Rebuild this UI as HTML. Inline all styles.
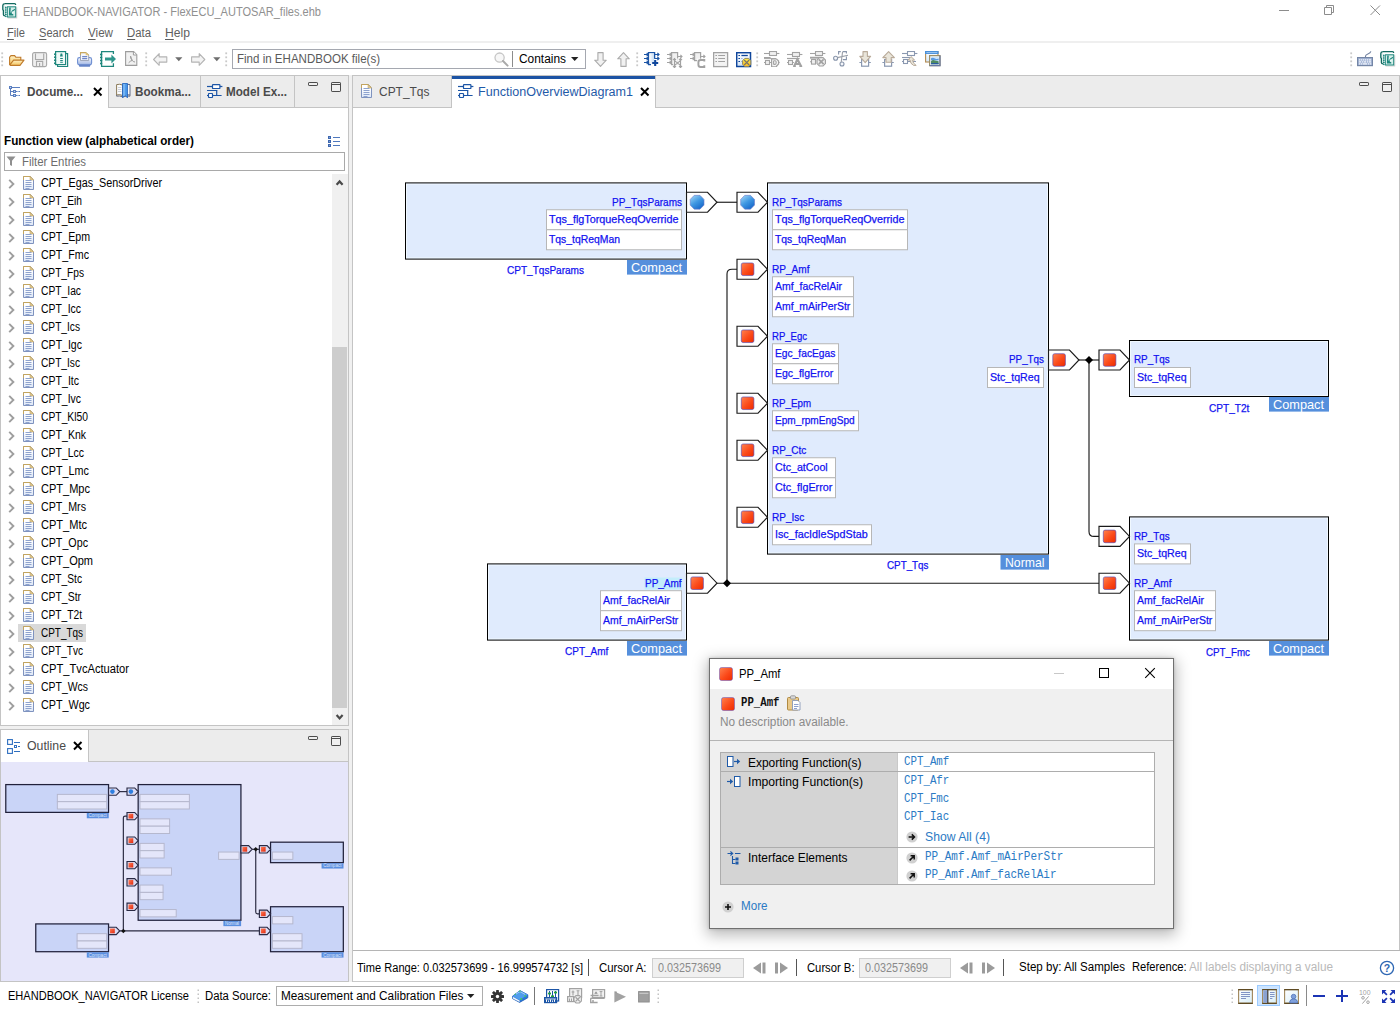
<!DOCTYPE html>
<html><head><meta charset="utf-8"><title>EHANDBOOK-NAVIGATOR</title>
<style>
html,body{margin:0;padding:0;background:#fff;}
body{width:1400px;height:1010px;position:relative;overflow:hidden;font-family:"Liberation Sans",sans-serif;}
.t{position:absolute;white-space:nowrap;line-height:1;transform-origin:0 0;}
.r{position:absolute;display:block;}
u{text-decoration:underline;text-underline-offset:1.5px;}
</style></head><body>
<span class="t" style="left:23.00px;top:6.04px;font-size:12px;color:#909090;transform:scaleX(0.9201);">EHANDBOOK-NAVIGATOR - FlexECU_AUTOSAR_files.ehb</span>
<svg class="r" style="left:1270px;top:0px;" width="130" height="22"><path d="M9 10.5H19" stroke="#8c8c8c" stroke-width="1" fill="none"/><path d="M54.5 7.5h7v7h-7zM56.5 7.5v-2h7v7h-2" stroke="#8c8c8c" stroke-width="1" fill="none"/><path d="M100.5 5.500l9.500 9.500M110 5.500l-9.500 9.500" stroke="#8c8c8c" stroke-width="1" fill="none"/></svg>
<span class="t" style="left:7.00px;top:27.04px;font-size:12px;color:#5f5f5f;transform:scaleX(0.9309);"><u>F</u>ile</span>
<span class="t" style="left:39.00px;top:27.04px;font-size:12px;color:#5f5f5f;transform:scaleX(0.9205);"><u>S</u>earch</span>
<span class="t" style="left:88.00px;top:27.04px;font-size:12px;color:#5f5f5f;transform:scaleX(0.9692);"><u>V</u>iew</span>
<span class="t" style="left:127.00px;top:27.04px;font-size:12px;color:#5f5f5f;transform:scaleX(0.9468);"><u>D</u>ata</span>
<span class="t" style="left:165.00px;top:27.04px;font-size:12px;color:#5f5f5f;transform:scaleX(1.0130);"><u>H</u>elp</span>
<div class="r" style="left:0px;top:41px;width:1400px;height:2px;background:#efefef;"></div>
<div class="r" style="left:232px;top:49px;width:354px;height:20px;background:#fff;border:1px solid #a5a8b0;box-sizing:border-box;"></div>
<span class="t" style="left:237.00px;top:52.64px;font-size:12px;color:#5a5a5a;transform:scaleX(0.9617);">Find in EHANDBOOK file(s)</span>
<div class="r" style="left:512px;top:51px;width:1px;height:16px;background:#8c8c8c;"></div>
<span class="t" style="left:519.00px;top:52.64px;font-size:12px;color:#000;transform:scaleX(0.9924);">Contains</span>
<svg class="r" style="left:570px;top:56px;" width="10" height="6"><path d="M1 1h7.4l-3.7 4z" fill="#222"/></svg>
<div class="r" style="left:0px;top:75px;width:349px;height:651px;background:#fff;border:1px solid #c4c4c4;box-sizing:border-box;"></div>
<div class="r" style="left:1px;top:76px;width:347px;height:31px;background:#ececec;"></div>
<div class="r" style="left:1px;top:107px;width:347px;height:1px;background:#c4c4c4;"></div>
<div class="r" style="left:1px;top:76px;width:107px;height:32px;background:#fff;"></div>
<div class="r" style="left:108px;top:76px;width:1px;height:31px;background:#c4c4c4;"></div>
<div class="r" style="left:200px;top:76px;width:1px;height:31px;background:#c4c4c4;"></div>
<div class="r" style="left:294px;top:76px;width:1px;height:31px;background:#c4c4c4;"></div>
<span class="t" style="left:27.00px;top:85.84px;font-size:12px;color:#4a4a4a;transform:scaleX(0.9765);font-weight:700;">Docume...</span>
<span class="t" style="left:134.50px;top:85.84px;font-size:12px;color:#4a4a4a;transform:scaleX(0.9765);font-weight:700;">Bookma...</span>
<span class="t" style="left:226.00px;top:85.84px;font-size:12px;color:#4a4a4a;transform:scaleX(0.9732);font-weight:700;">Model Ex...</span>
<svg class="r" style="left:92.7px;top:86.7px;" width="10" height="10"><path d="M1 1l7.5 7.5M8.5 1l-7.5 7.5" stroke="#000" stroke-width="2" fill="none"/></svg>
<svg class="r" style="left:308px;top:82px;" width="11" height="6"><rect x="0.5" y="0.5" width="9" height="3" rx="0.6" fill="#f0f0f0" stroke="#4c4c4c" stroke-width="1"/></svg><svg class="r" style="left:331px;top:82px;" width="11" height="11"><rect x="0.5" y="0.5" width="9" height="9" rx="0.6" fill="#f0f0f0" stroke="#4c4c4c" stroke-width="1"/><path d="M0.5 2.5h9" stroke="#4c4c4c" stroke-width="1"/></svg>
<div class="r" style="left:352px;top:75px;width:1048px;height:876px;background:#fff;border:1px solid #c4c4c4;box-sizing:border-box;"></div>
<div class="r" style="left:353px;top:76px;width:1046px;height:31px;background:#ececec;"></div>
<div class="r" style="left:353px;top:107px;width:1046px;height:1px;background:#c4c4c4;"></div>
<div class="r" style="left:452px;top:76px;width:203px;height:32px;background:#fff;"></div>
<div class="r" style="left:452px;top:76px;width:203px;height:3px;background:#1c53a4;"></div>
<div class="r" style="left:451px;top:76px;width:1px;height:31px;background:#c4c4c4;"></div>
<div class="r" style="left:655px;top:76px;width:1px;height:31px;background:#c4c4c4;"></div>
<span class="t" style="left:378.50px;top:86.24px;font-size:12px;color:#4a4a4a;transform:scaleX(0.9965);">CPT_Tqs</span>
<span class="t" style="left:478.00px;top:86.24px;font-size:12px;color:#1f5aa8;transform:scaleX(1.0469);">FunctionOverviewDiagram1</span>
<svg class="r" style="left:639.7px;top:86.7px;" width="10" height="10"><path d="M1 1l7.5 7.5M8.5 1l-7.5 7.5" stroke="#000" stroke-width="2" fill="none"/></svg>
<svg class="r" style="left:1359px;top:82px;" width="11" height="6"><rect x="0.5" y="0.5" width="9" height="3" rx="0.6" fill="#f0f0f0" stroke="#4c4c4c" stroke-width="1"/></svg><svg class="r" style="left:1382px;top:82px;" width="11" height="11"><rect x="0.5" y="0.5" width="9" height="9" rx="0.6" fill="#f0f0f0" stroke="#4c4c4c" stroke-width="1"/><path d="M0.5 2.5h9" stroke="#4c4c4c" stroke-width="1"/></svg>
<div class="r" style="left:349px;top:75px;width:3px;height:907px;background:#f0f0f0;"></div>
<div class="r" style="left:0px;top:726px;width:349px;height:3px;background:#f0f0f0;"></div>
<span class="t" style="left:4.00px;top:135.04px;font-size:12px;color:#000;transform:scaleX(0.9759);font-weight:700;">Function view (alphabetical order)</span>
<div class="r" style="left:4px;top:152px;width:341px;height:19px;background:#fff;border:1px solid #a9a9a9;box-sizing:border-box;"></div>
<span class="t" style="left:22.00px;top:156.04px;font-size:12px;color:#6d6d6d;transform:scaleX(0.9503);">Filter Entries</span>
<svg class="r" style="left:6.3px;top:156px;" width="10" height="11"><path d="M0.500 0.500h9l-3.500 4.200v5.300l-2-1v-4.300z" fill="#8f8f8f"/></svg>
<svg class="r" style="left:327px;top:135px;" width="14" height="13"><rect x="1.5" y="1.5" width="2" height="2" fill="#7f9fd4" stroke="#3d67b0" stroke-width="1"/><path d="M6 2.5h7" stroke="#4f78bd" stroke-width="1"/><rect x="1.5" y="5.5" width="2" height="2" fill="#7f9fd4" stroke="#3d67b0" stroke-width="1"/><path d="M6 6.5h7" stroke="#4f78bd" stroke-width="1"/><rect x="1.5" y="9.5" width="2" height="2" fill="#7f9fd4" stroke="#3d67b0" stroke-width="1"/><path d="M6 10.5h7" stroke="#4f78bd" stroke-width="1"/></svg>
<svg class="r" style="left:8px;top:179px;" width="8" height="10"><path d="M1.200 0.800l4.200 4.200-4.200 4.200" stroke="#9e9e9e" stroke-width="1.900" fill="none"/></svg>
<svg class="r" style="left:23px;top:176px;" width="12" height="15"><defs><linearGradient id="dg" x1="0" y1="0" x2="0" y2="1"><stop offset="0.35" stop-color="#fff"/><stop offset="1" stop-color="#dce6f6"/></linearGradient></defs><path d="M0.5 0.5h6.600l3.400 3.400v9.600h-10z" fill="url(#dg)" stroke="#7f93bf" stroke-width="1"/><path d="M0.500 4V0.500h6.600l3.400 3.400" fill="none" stroke="#c4a55e" stroke-width="1"/><path d="M7.100 0.700v3.200h3.200z" fill="#e8d5a0" stroke="#c4a55e" stroke-width="0.700"/><path d="M2.500 4.5h6" stroke="#8ea3cf" stroke-width="1"/><path d="M2.500 6.5h6" stroke="#8ea3cf" stroke-width="1"/><path d="M2.500 8.5h6" stroke="#8ea3cf" stroke-width="1"/><path d="M2.500 10.5h6" stroke="#8ea3cf" stroke-width="1"/><path d="M2.500 12.5h4" stroke="#8ea3cf" stroke-width="1"/></svg>
<span class="t" style="left:41.20px;top:177.04px;font-size:12px;color:#000;transform:scaleX(0.8982);">CPT_Egas_SensorDriver</span>
<svg class="r" style="left:8px;top:197px;" width="8" height="10"><path d="M1.200 0.800l4.200 4.200-4.200 4.200" stroke="#9e9e9e" stroke-width="1.900" fill="none"/></svg>
<svg class="r" style="left:23px;top:194px;" width="12" height="15"><defs><linearGradient id="dg" x1="0" y1="0" x2="0" y2="1"><stop offset="0.35" stop-color="#fff"/><stop offset="1" stop-color="#dce6f6"/></linearGradient></defs><path d="M0.5 0.5h6.600l3.400 3.400v9.600h-10z" fill="url(#dg)" stroke="#7f93bf" stroke-width="1"/><path d="M0.500 4V0.500h6.600l3.400 3.400" fill="none" stroke="#c4a55e" stroke-width="1"/><path d="M7.100 0.700v3.200h3.200z" fill="#e8d5a0" stroke="#c4a55e" stroke-width="0.700"/><path d="M2.500 4.5h6" stroke="#8ea3cf" stroke-width="1"/><path d="M2.500 6.5h6" stroke="#8ea3cf" stroke-width="1"/><path d="M2.500 8.5h6" stroke="#8ea3cf" stroke-width="1"/><path d="M2.500 10.5h6" stroke="#8ea3cf" stroke-width="1"/><path d="M2.500 12.5h4" stroke="#8ea3cf" stroke-width="1"/></svg>
<span class="t" style="left:41.20px;top:195.04px;font-size:12px;color:#000;transform:scaleX(0.8538);">CPT_Eih</span>
<svg class="r" style="left:8px;top:215px;" width="8" height="10"><path d="M1.200 0.800l4.200 4.200-4.200 4.200" stroke="#9e9e9e" stroke-width="1.900" fill="none"/></svg>
<svg class="r" style="left:23px;top:212px;" width="12" height="15"><defs><linearGradient id="dg" x1="0" y1="0" x2="0" y2="1"><stop offset="0.35" stop-color="#fff"/><stop offset="1" stop-color="#dce6f6"/></linearGradient></defs><path d="M0.5 0.5h6.600l3.400 3.400v9.600h-10z" fill="url(#dg)" stroke="#7f93bf" stroke-width="1"/><path d="M0.500 4V0.500h6.600l3.400 3.400" fill="none" stroke="#c4a55e" stroke-width="1"/><path d="M7.100 0.700v3.200h3.200z" fill="#e8d5a0" stroke="#c4a55e" stroke-width="0.700"/><path d="M2.500 4.5h6" stroke="#8ea3cf" stroke-width="1"/><path d="M2.500 6.5h6" stroke="#8ea3cf" stroke-width="1"/><path d="M2.500 8.5h6" stroke="#8ea3cf" stroke-width="1"/><path d="M2.500 10.5h6" stroke="#8ea3cf" stroke-width="1"/><path d="M2.500 12.5h4" stroke="#8ea3cf" stroke-width="1"/></svg>
<span class="t" style="left:41.20px;top:213.04px;font-size:12px;color:#000;transform:scaleX(0.8650);">CPT_Eoh</span>
<svg class="r" style="left:8px;top:233px;" width="8" height="10"><path d="M1.200 0.800l4.200 4.200-4.200 4.200" stroke="#9e9e9e" stroke-width="1.900" fill="none"/></svg>
<svg class="r" style="left:23px;top:230px;" width="12" height="15"><defs><linearGradient id="dg" x1="0" y1="0" x2="0" y2="1"><stop offset="0.35" stop-color="#fff"/><stop offset="1" stop-color="#dce6f6"/></linearGradient></defs><path d="M0.5 0.5h6.600l3.400 3.400v9.600h-10z" fill="url(#dg)" stroke="#7f93bf" stroke-width="1"/><path d="M0.500 4V0.500h6.600l3.400 3.400" fill="none" stroke="#c4a55e" stroke-width="1"/><path d="M7.100 0.700v3.200h3.200z" fill="#e8d5a0" stroke="#c4a55e" stroke-width="0.700"/><path d="M2.500 4.5h6" stroke="#8ea3cf" stroke-width="1"/><path d="M2.500 6.5h6" stroke="#8ea3cf" stroke-width="1"/><path d="M2.500 8.5h6" stroke="#8ea3cf" stroke-width="1"/><path d="M2.500 10.5h6" stroke="#8ea3cf" stroke-width="1"/><path d="M2.500 12.5h4" stroke="#8ea3cf" stroke-width="1"/></svg>
<span class="t" style="left:41.20px;top:231.04px;font-size:12px;color:#000;transform:scaleX(0.8853);">CPT_Epm</span>
<svg class="r" style="left:8px;top:251px;" width="8" height="10"><path d="M1.200 0.800l4.200 4.200-4.200 4.200" stroke="#9e9e9e" stroke-width="1.900" fill="none"/></svg>
<svg class="r" style="left:23px;top:248px;" width="12" height="15"><defs><linearGradient id="dg" x1="0" y1="0" x2="0" y2="1"><stop offset="0.35" stop-color="#fff"/><stop offset="1" stop-color="#dce6f6"/></linearGradient></defs><path d="M0.5 0.5h6.600l3.400 3.400v9.600h-10z" fill="url(#dg)" stroke="#7f93bf" stroke-width="1"/><path d="M0.500 4V0.500h6.600l3.400 3.400" fill="none" stroke="#c4a55e" stroke-width="1"/><path d="M7.100 0.700v3.200h3.200z" fill="#e8d5a0" stroke="#c4a55e" stroke-width="0.700"/><path d="M2.500 4.5h6" stroke="#8ea3cf" stroke-width="1"/><path d="M2.500 6.5h6" stroke="#8ea3cf" stroke-width="1"/><path d="M2.500 8.5h6" stroke="#8ea3cf" stroke-width="1"/><path d="M2.500 10.5h6" stroke="#8ea3cf" stroke-width="1"/><path d="M2.500 12.5h4" stroke="#8ea3cf" stroke-width="1"/></svg>
<span class="t" style="left:41.20px;top:249.04px;font-size:12px;color:#000;transform:scaleX(0.8889);">CPT_Fmc</span>
<svg class="r" style="left:8px;top:269px;" width="8" height="10"><path d="M1.200 0.800l4.200 4.200-4.200 4.200" stroke="#9e9e9e" stroke-width="1.900" fill="none"/></svg>
<svg class="r" style="left:23px;top:266px;" width="12" height="15"><defs><linearGradient id="dg" x1="0" y1="0" x2="0" y2="1"><stop offset="0.35" stop-color="#fff"/><stop offset="1" stop-color="#dce6f6"/></linearGradient></defs><path d="M0.5 0.5h6.600l3.400 3.400v9.600h-10z" fill="url(#dg)" stroke="#7f93bf" stroke-width="1"/><path d="M0.500 4V0.500h6.600l3.400 3.400" fill="none" stroke="#c4a55e" stroke-width="1"/><path d="M7.100 0.700v3.200h3.200z" fill="#e8d5a0" stroke="#c4a55e" stroke-width="0.700"/><path d="M2.500 4.5h6" stroke="#8ea3cf" stroke-width="1"/><path d="M2.500 6.5h6" stroke="#8ea3cf" stroke-width="1"/><path d="M2.500 8.5h6" stroke="#8ea3cf" stroke-width="1"/><path d="M2.500 10.5h6" stroke="#8ea3cf" stroke-width="1"/><path d="M2.500 12.5h4" stroke="#8ea3cf" stroke-width="1"/></svg>
<span class="t" style="left:41.20px;top:267.04px;font-size:12px;color:#000;transform:scaleX(0.8485);">CPT_Fps</span>
<svg class="r" style="left:8px;top:287px;" width="8" height="10"><path d="M1.200 0.800l4.200 4.200-4.200 4.200" stroke="#9e9e9e" stroke-width="1.900" fill="none"/></svg>
<svg class="r" style="left:23px;top:284px;" width="12" height="15"><defs><linearGradient id="dg" x1="0" y1="0" x2="0" y2="1"><stop offset="0.35" stop-color="#fff"/><stop offset="1" stop-color="#dce6f6"/></linearGradient></defs><path d="M0.5 0.5h6.600l3.400 3.400v9.600h-10z" fill="url(#dg)" stroke="#7f93bf" stroke-width="1"/><path d="M0.500 4V0.500h6.600l3.400 3.400" fill="none" stroke="#c4a55e" stroke-width="1"/><path d="M7.100 0.700v3.200h3.200z" fill="#e8d5a0" stroke="#c4a55e" stroke-width="0.700"/><path d="M2.500 4.5h6" stroke="#8ea3cf" stroke-width="1"/><path d="M2.500 6.5h6" stroke="#8ea3cf" stroke-width="1"/><path d="M2.500 8.5h6" stroke="#8ea3cf" stroke-width="1"/><path d="M2.500 10.5h6" stroke="#8ea3cf" stroke-width="1"/><path d="M2.500 12.5h4" stroke="#8ea3cf" stroke-width="1"/></svg>
<span class="t" style="left:41.20px;top:285.04px;font-size:12px;color:#000;transform:scaleX(0.8569);">CPT_Iac</span>
<svg class="r" style="left:8px;top:305px;" width="8" height="10"><path d="M1.200 0.800l4.200 4.200-4.200 4.200" stroke="#9e9e9e" stroke-width="1.900" fill="none"/></svg>
<svg class="r" style="left:23px;top:302px;" width="12" height="15"><defs><linearGradient id="dg" x1="0" y1="0" x2="0" y2="1"><stop offset="0.35" stop-color="#fff"/><stop offset="1" stop-color="#dce6f6"/></linearGradient></defs><path d="M0.5 0.5h6.600l3.400 3.400v9.600h-10z" fill="url(#dg)" stroke="#7f93bf" stroke-width="1"/><path d="M0.500 4V0.500h6.600l3.400 3.400" fill="none" stroke="#c4a55e" stroke-width="1"/><path d="M7.100 0.700v3.200h3.200z" fill="#e8d5a0" stroke="#c4a55e" stroke-width="0.700"/><path d="M2.500 4.5h6" stroke="#8ea3cf" stroke-width="1"/><path d="M2.500 6.5h6" stroke="#8ea3cf" stroke-width="1"/><path d="M2.500 8.5h6" stroke="#8ea3cf" stroke-width="1"/><path d="M2.500 10.5h6" stroke="#8ea3cf" stroke-width="1"/><path d="M2.500 12.5h4" stroke="#8ea3cf" stroke-width="1"/></svg>
<span class="t" style="left:41.20px;top:303.04px;font-size:12px;color:#000;transform:scaleX(0.8694);">CPT_Icc</span>
<svg class="r" style="left:8px;top:323px;" width="8" height="10"><path d="M1.200 0.800l4.200 4.200-4.200 4.200" stroke="#9e9e9e" stroke-width="1.900" fill="none"/></svg>
<svg class="r" style="left:23px;top:320px;" width="12" height="15"><defs><linearGradient id="dg" x1="0" y1="0" x2="0" y2="1"><stop offset="0.35" stop-color="#fff"/><stop offset="1" stop-color="#dce6f6"/></linearGradient></defs><path d="M0.5 0.5h6.600l3.400 3.400v9.600h-10z" fill="url(#dg)" stroke="#7f93bf" stroke-width="1"/><path d="M0.500 4V0.500h6.600l3.400 3.400" fill="none" stroke="#c4a55e" stroke-width="1"/><path d="M7.100 0.700v3.200h3.200z" fill="#e8d5a0" stroke="#c4a55e" stroke-width="0.700"/><path d="M2.500 4.5h6" stroke="#8ea3cf" stroke-width="1"/><path d="M2.500 6.5h6" stroke="#8ea3cf" stroke-width="1"/><path d="M2.500 8.5h6" stroke="#8ea3cf" stroke-width="1"/><path d="M2.500 10.5h6" stroke="#8ea3cf" stroke-width="1"/><path d="M2.500 12.5h4" stroke="#8ea3cf" stroke-width="1"/></svg>
<span class="t" style="left:41.20px;top:321.04px;font-size:12px;color:#000;transform:scaleX(0.8477);">CPT_Ics</span>
<svg class="r" style="left:8px;top:341px;" width="8" height="10"><path d="M1.200 0.800l4.200 4.200-4.200 4.200" stroke="#9e9e9e" stroke-width="1.900" fill="none"/></svg>
<svg class="r" style="left:23px;top:338px;" width="12" height="15"><defs><linearGradient id="dg" x1="0" y1="0" x2="0" y2="1"><stop offset="0.35" stop-color="#fff"/><stop offset="1" stop-color="#dce6f6"/></linearGradient></defs><path d="M0.5 0.5h6.600l3.400 3.400v9.600h-10z" fill="url(#dg)" stroke="#7f93bf" stroke-width="1"/><path d="M0.500 4V0.500h6.600l3.400 3.400" fill="none" stroke="#c4a55e" stroke-width="1"/><path d="M7.100 0.700v3.200h3.200z" fill="#e8d5a0" stroke="#c4a55e" stroke-width="0.700"/><path d="M2.500 4.5h6" stroke="#8ea3cf" stroke-width="1"/><path d="M2.500 6.5h6" stroke="#8ea3cf" stroke-width="1"/><path d="M2.500 8.5h6" stroke="#8ea3cf" stroke-width="1"/><path d="M2.500 10.5h6" stroke="#8ea3cf" stroke-width="1"/><path d="M2.500 12.5h4" stroke="#8ea3cf" stroke-width="1"/></svg>
<span class="t" style="left:41.20px;top:339.04px;font-size:12px;color:#000;transform:scaleX(0.8783);">CPT_Igc</span>
<svg class="r" style="left:8px;top:359px;" width="8" height="10"><path d="M1.200 0.800l4.200 4.200-4.200 4.200" stroke="#9e9e9e" stroke-width="1.900" fill="none"/></svg>
<svg class="r" style="left:23px;top:356px;" width="12" height="15"><defs><linearGradient id="dg" x1="0" y1="0" x2="0" y2="1"><stop offset="0.35" stop-color="#fff"/><stop offset="1" stop-color="#dce6f6"/></linearGradient></defs><path d="M0.5 0.5h6.600l3.400 3.400v9.600h-10z" fill="url(#dg)" stroke="#7f93bf" stroke-width="1"/><path d="M0.500 4V0.500h6.600l3.400 3.400" fill="none" stroke="#c4a55e" stroke-width="1"/><path d="M7.100 0.700v3.200h3.200z" fill="#e8d5a0" stroke="#c4a55e" stroke-width="0.700"/><path d="M2.500 4.5h6" stroke="#8ea3cf" stroke-width="1"/><path d="M2.500 6.5h6" stroke="#8ea3cf" stroke-width="1"/><path d="M2.500 8.5h6" stroke="#8ea3cf" stroke-width="1"/><path d="M2.500 10.5h6" stroke="#8ea3cf" stroke-width="1"/><path d="M2.500 12.5h4" stroke="#8ea3cf" stroke-width="1"/></svg>
<span class="t" style="left:41.20px;top:357.04px;font-size:12px;color:#000;transform:scaleX(0.8477);">CPT_Isc</span>
<svg class="r" style="left:8px;top:377px;" width="8" height="10"><path d="M1.200 0.800l4.200 4.200-4.200 4.200" stroke="#9e9e9e" stroke-width="1.900" fill="none"/></svg>
<svg class="r" style="left:23px;top:374px;" width="12" height="15"><defs><linearGradient id="dg" x1="0" y1="0" x2="0" y2="1"><stop offset="0.35" stop-color="#fff"/><stop offset="1" stop-color="#dce6f6"/></linearGradient></defs><path d="M0.5 0.5h6.600l3.400 3.400v9.600h-10z" fill="url(#dg)" stroke="#7f93bf" stroke-width="1"/><path d="M0.500 4V0.500h6.600l3.400 3.400" fill="none" stroke="#c4a55e" stroke-width="1"/><path d="M7.100 0.700v3.200h3.200z" fill="#e8d5a0" stroke="#c4a55e" stroke-width="0.700"/><path d="M2.500 4.5h6" stroke="#8ea3cf" stroke-width="1"/><path d="M2.500 6.5h6" stroke="#8ea3cf" stroke-width="1"/><path d="M2.500 8.5h6" stroke="#8ea3cf" stroke-width="1"/><path d="M2.500 10.5h6" stroke="#8ea3cf" stroke-width="1"/><path d="M2.500 12.5h4" stroke="#8ea3cf" stroke-width="1"/></svg>
<span class="t" style="left:41.20px;top:375.04px;font-size:12px;color:#000;transform:scaleX(0.8767);">CPT_Itc</span>
<svg class="r" style="left:8px;top:395px;" width="8" height="10"><path d="M1.200 0.800l4.200 4.200-4.200 4.200" stroke="#9e9e9e" stroke-width="1.900" fill="none"/></svg>
<svg class="r" style="left:23px;top:392px;" width="12" height="15"><defs><linearGradient id="dg" x1="0" y1="0" x2="0" y2="1"><stop offset="0.35" stop-color="#fff"/><stop offset="1" stop-color="#dce6f6"/></linearGradient></defs><path d="M0.5 0.5h6.600l3.400 3.400v9.600h-10z" fill="url(#dg)" stroke="#7f93bf" stroke-width="1"/><path d="M0.500 4V0.500h6.600l3.400 3.400" fill="none" stroke="#c4a55e" stroke-width="1"/><path d="M7.100 0.700v3.200h3.200z" fill="#e8d5a0" stroke="#c4a55e" stroke-width="0.700"/><path d="M2.500 4.5h6" stroke="#8ea3cf" stroke-width="1"/><path d="M2.500 6.5h6" stroke="#8ea3cf" stroke-width="1"/><path d="M2.500 8.5h6" stroke="#8ea3cf" stroke-width="1"/><path d="M2.500 10.5h6" stroke="#8ea3cf" stroke-width="1"/><path d="M2.500 12.5h4" stroke="#8ea3cf" stroke-width="1"/></svg>
<span class="t" style="left:41.20px;top:393.04px;font-size:12px;color:#000;transform:scaleX(0.8694);">CPT_Ivc</span>
<svg class="r" style="left:8px;top:413px;" width="8" height="10"><path d="M1.200 0.800l4.200 4.200-4.200 4.200" stroke="#9e9e9e" stroke-width="1.900" fill="none"/></svg>
<svg class="r" style="left:23px;top:410px;" width="12" height="15"><defs><linearGradient id="dg" x1="0" y1="0" x2="0" y2="1"><stop offset="0.35" stop-color="#fff"/><stop offset="1" stop-color="#dce6f6"/></linearGradient></defs><path d="M0.5 0.5h6.600l3.400 3.400v9.600h-10z" fill="url(#dg)" stroke="#7f93bf" stroke-width="1"/><path d="M0.500 4V0.500h6.600l3.400 3.400" fill="none" stroke="#c4a55e" stroke-width="1"/><path d="M7.100 0.700v3.200h3.200z" fill="#e8d5a0" stroke="#c4a55e" stroke-width="0.700"/><path d="M2.500 4.5h6" stroke="#8ea3cf" stroke-width="1"/><path d="M2.500 6.5h6" stroke="#8ea3cf" stroke-width="1"/><path d="M2.500 8.5h6" stroke="#8ea3cf" stroke-width="1"/><path d="M2.500 10.5h6" stroke="#8ea3cf" stroke-width="1"/><path d="M2.500 12.5h4" stroke="#8ea3cf" stroke-width="1"/></svg>
<span class="t" style="left:41.20px;top:411.04px;font-size:12px;color:#000;transform:scaleX(0.8594);">CPT_Kl50</span>
<svg class="r" style="left:8px;top:431px;" width="8" height="10"><path d="M1.200 0.800l4.200 4.200-4.200 4.200" stroke="#9e9e9e" stroke-width="1.900" fill="none"/></svg>
<svg class="r" style="left:23px;top:428px;" width="12" height="15"><defs><linearGradient id="dg" x1="0" y1="0" x2="0" y2="1"><stop offset="0.35" stop-color="#fff"/><stop offset="1" stop-color="#dce6f6"/></linearGradient></defs><path d="M0.5 0.5h6.600l3.400 3.400v9.600h-10z" fill="url(#dg)" stroke="#7f93bf" stroke-width="1"/><path d="M0.500 4V0.500h6.600l3.400 3.400" fill="none" stroke="#c4a55e" stroke-width="1"/><path d="M7.100 0.700v3.200h3.200z" fill="#e8d5a0" stroke="#c4a55e" stroke-width="0.700"/><path d="M2.500 4.5h6" stroke="#8ea3cf" stroke-width="1"/><path d="M2.500 6.5h6" stroke="#8ea3cf" stroke-width="1"/><path d="M2.500 8.5h6" stroke="#8ea3cf" stroke-width="1"/><path d="M2.500 10.5h6" stroke="#8ea3cf" stroke-width="1"/><path d="M2.500 12.5h4" stroke="#8ea3cf" stroke-width="1"/></svg>
<span class="t" style="left:41.20px;top:429.04px;font-size:12px;color:#000;transform:scaleX(0.8763);">CPT_Knk</span>
<svg class="r" style="left:8px;top:449px;" width="8" height="10"><path d="M1.200 0.800l4.200 4.200-4.200 4.200" stroke="#9e9e9e" stroke-width="1.900" fill="none"/></svg>
<svg class="r" style="left:23px;top:446px;" width="12" height="15"><defs><linearGradient id="dg" x1="0" y1="0" x2="0" y2="1"><stop offset="0.35" stop-color="#fff"/><stop offset="1" stop-color="#dce6f6"/></linearGradient></defs><path d="M0.5 0.5h6.600l3.400 3.400v9.600h-10z" fill="url(#dg)" stroke="#7f93bf" stroke-width="1"/><path d="M0.500 4V0.500h6.600l3.400 3.400" fill="none" stroke="#c4a55e" stroke-width="1"/><path d="M7.100 0.700v3.200h3.200z" fill="#e8d5a0" stroke="#c4a55e" stroke-width="0.700"/><path d="M2.500 4.5h6" stroke="#8ea3cf" stroke-width="1"/><path d="M2.500 6.5h6" stroke="#8ea3cf" stroke-width="1"/><path d="M2.500 8.5h6" stroke="#8ea3cf" stroke-width="1"/><path d="M2.500 10.5h6" stroke="#8ea3cf" stroke-width="1"/><path d="M2.500 12.5h4" stroke="#8ea3cf" stroke-width="1"/></svg>
<span class="t" style="left:41.20px;top:447.04px;font-size:12px;color:#000;transform:scaleX(0.8714);">CPT_Lcc</span>
<svg class="r" style="left:8px;top:467px;" width="8" height="10"><path d="M1.200 0.800l4.200 4.200-4.200 4.200" stroke="#9e9e9e" stroke-width="1.900" fill="none"/></svg>
<svg class="r" style="left:23px;top:464px;" width="12" height="15"><defs><linearGradient id="dg" x1="0" y1="0" x2="0" y2="1"><stop offset="0.35" stop-color="#fff"/><stop offset="1" stop-color="#dce6f6"/></linearGradient></defs><path d="M0.5 0.5h6.600l3.400 3.400v9.600h-10z" fill="url(#dg)" stroke="#7f93bf" stroke-width="1"/><path d="M0.500 4V0.500h6.600l3.400 3.400" fill="none" stroke="#c4a55e" stroke-width="1"/><path d="M7.100 0.700v3.200h3.200z" fill="#e8d5a0" stroke="#c4a55e" stroke-width="0.700"/><path d="M2.500 4.5h6" stroke="#8ea3cf" stroke-width="1"/><path d="M2.500 6.5h6" stroke="#8ea3cf" stroke-width="1"/><path d="M2.500 8.5h6" stroke="#8ea3cf" stroke-width="1"/><path d="M2.500 10.5h6" stroke="#8ea3cf" stroke-width="1"/><path d="M2.500 12.5h4" stroke="#8ea3cf" stroke-width="1"/></svg>
<span class="t" style="left:41.20px;top:465.04px;font-size:12px;color:#000;transform:scaleX(0.8998);">CPT_Lmc</span>
<svg class="r" style="left:8px;top:485px;" width="8" height="10"><path d="M1.200 0.800l4.200 4.200-4.200 4.200" stroke="#9e9e9e" stroke-width="1.900" fill="none"/></svg>
<svg class="r" style="left:23px;top:482px;" width="12" height="15"><defs><linearGradient id="dg" x1="0" y1="0" x2="0" y2="1"><stop offset="0.35" stop-color="#fff"/><stop offset="1" stop-color="#dce6f6"/></linearGradient></defs><path d="M0.5 0.5h6.600l3.400 3.400v9.600h-10z" fill="url(#dg)" stroke="#7f93bf" stroke-width="1"/><path d="M0.500 4V0.500h6.600l3.400 3.400" fill="none" stroke="#c4a55e" stroke-width="1"/><path d="M7.100 0.700v3.200h3.200z" fill="#e8d5a0" stroke="#c4a55e" stroke-width="0.700"/><path d="M2.500 4.5h6" stroke="#8ea3cf" stroke-width="1"/><path d="M2.500 6.5h6" stroke="#8ea3cf" stroke-width="1"/><path d="M2.500 8.5h6" stroke="#8ea3cf" stroke-width="1"/><path d="M2.500 10.5h6" stroke="#8ea3cf" stroke-width="1"/><path d="M2.500 12.5h4" stroke="#8ea3cf" stroke-width="1"/></svg>
<span class="t" style="left:41.20px;top:483.04px;font-size:12px;color:#000;transform:scaleX(0.9186);">CPT_Mpc</span>
<svg class="r" style="left:8px;top:503px;" width="8" height="10"><path d="M1.200 0.800l4.200 4.200-4.200 4.200" stroke="#9e9e9e" stroke-width="1.900" fill="none"/></svg>
<svg class="r" style="left:23px;top:500px;" width="12" height="15"><defs><linearGradient id="dg" x1="0" y1="0" x2="0" y2="1"><stop offset="0.35" stop-color="#fff"/><stop offset="1" stop-color="#dce6f6"/></linearGradient></defs><path d="M0.5 0.5h6.600l3.400 3.400v9.600h-10z" fill="url(#dg)" stroke="#7f93bf" stroke-width="1"/><path d="M0.500 4V0.500h6.600l3.400 3.400" fill="none" stroke="#c4a55e" stroke-width="1"/><path d="M7.100 0.700v3.200h3.200z" fill="#e8d5a0" stroke="#c4a55e" stroke-width="0.700"/><path d="M2.500 4.5h6" stroke="#8ea3cf" stroke-width="1"/><path d="M2.500 6.5h6" stroke="#8ea3cf" stroke-width="1"/><path d="M2.500 8.5h6" stroke="#8ea3cf" stroke-width="1"/><path d="M2.500 10.5h6" stroke="#8ea3cf" stroke-width="1"/><path d="M2.500 12.5h4" stroke="#8ea3cf" stroke-width="1"/></svg>
<span class="t" style="left:41.20px;top:501.04px;font-size:12px;color:#000;transform:scaleX(0.8882);">CPT_Mrs</span>
<svg class="r" style="left:8px;top:521px;" width="8" height="10"><path d="M1.200 0.800l4.200 4.200-4.200 4.200" stroke="#9e9e9e" stroke-width="1.900" fill="none"/></svg>
<svg class="r" style="left:23px;top:518px;" width="12" height="15"><defs><linearGradient id="dg" x1="0" y1="0" x2="0" y2="1"><stop offset="0.35" stop-color="#fff"/><stop offset="1" stop-color="#dce6f6"/></linearGradient></defs><path d="M0.5 0.5h6.600l3.400 3.400v9.600h-10z" fill="url(#dg)" stroke="#7f93bf" stroke-width="1"/><path d="M0.500 4V0.500h6.600l3.400 3.400" fill="none" stroke="#c4a55e" stroke-width="1"/><path d="M7.100 0.700v3.200h3.200z" fill="#e8d5a0" stroke="#c4a55e" stroke-width="0.700"/><path d="M2.500 4.5h6" stroke="#8ea3cf" stroke-width="1"/><path d="M2.500 6.5h6" stroke="#8ea3cf" stroke-width="1"/><path d="M2.500 8.5h6" stroke="#8ea3cf" stroke-width="1"/><path d="M2.500 10.5h6" stroke="#8ea3cf" stroke-width="1"/><path d="M2.500 12.5h4" stroke="#8ea3cf" stroke-width="1"/></svg>
<span class="t" style="left:41.20px;top:519.04px;font-size:12px;color:#000;transform:scaleX(0.9199);">CPT_Mtc</span>
<svg class="r" style="left:8px;top:539px;" width="8" height="10"><path d="M1.200 0.800l4.200 4.200-4.200 4.200" stroke="#9e9e9e" stroke-width="1.900" fill="none"/></svg>
<svg class="r" style="left:23px;top:536px;" width="12" height="15"><defs><linearGradient id="dg" x1="0" y1="0" x2="0" y2="1"><stop offset="0.35" stop-color="#fff"/><stop offset="1" stop-color="#dce6f6"/></linearGradient></defs><path d="M0.5 0.5h6.600l3.400 3.400v9.600h-10z" fill="url(#dg)" stroke="#7f93bf" stroke-width="1"/><path d="M0.500 4V0.500h6.600l3.400 3.400" fill="none" stroke="#c4a55e" stroke-width="1"/><path d="M7.100 0.700v3.200h3.200z" fill="#e8d5a0" stroke="#c4a55e" stroke-width="0.700"/><path d="M2.500 4.5h6" stroke="#8ea3cf" stroke-width="1"/><path d="M2.500 6.5h6" stroke="#8ea3cf" stroke-width="1"/><path d="M2.500 8.5h6" stroke="#8ea3cf" stroke-width="1"/><path d="M2.500 10.5h6" stroke="#8ea3cf" stroke-width="1"/><path d="M2.500 12.5h4" stroke="#8ea3cf" stroke-width="1"/></svg>
<span class="t" style="left:41.20px;top:537.04px;font-size:12px;color:#000;transform:scaleX(0.8921);">CPT_Opc</span>
<svg class="r" style="left:8px;top:557px;" width="8" height="10"><path d="M1.200 0.800l4.200 4.200-4.200 4.200" stroke="#9e9e9e" stroke-width="1.900" fill="none"/></svg>
<svg class="r" style="left:23px;top:554px;" width="12" height="15"><defs><linearGradient id="dg" x1="0" y1="0" x2="0" y2="1"><stop offset="0.35" stop-color="#fff"/><stop offset="1" stop-color="#dce6f6"/></linearGradient></defs><path d="M0.5 0.5h6.600l3.400 3.400v9.600h-10z" fill="url(#dg)" stroke="#7f93bf" stroke-width="1"/><path d="M0.500 4V0.500h6.600l3.400 3.400" fill="none" stroke="#c4a55e" stroke-width="1"/><path d="M7.100 0.700v3.200h3.200z" fill="#e8d5a0" stroke="#c4a55e" stroke-width="0.700"/><path d="M2.500 4.5h6" stroke="#8ea3cf" stroke-width="1"/><path d="M2.500 6.5h6" stroke="#8ea3cf" stroke-width="1"/><path d="M2.500 8.5h6" stroke="#8ea3cf" stroke-width="1"/><path d="M2.500 10.5h6" stroke="#8ea3cf" stroke-width="1"/><path d="M2.500 12.5h4" stroke="#8ea3cf" stroke-width="1"/></svg>
<span class="t" style="left:41.20px;top:555.04px;font-size:12px;color:#000;transform:scaleX(0.9175);">CPT_Opm</span>
<svg class="r" style="left:8px;top:575px;" width="8" height="10"><path d="M1.200 0.800l4.200 4.200-4.200 4.200" stroke="#9e9e9e" stroke-width="1.900" fill="none"/></svg>
<svg class="r" style="left:23px;top:572px;" width="12" height="15"><defs><linearGradient id="dg" x1="0" y1="0" x2="0" y2="1"><stop offset="0.35" stop-color="#fff"/><stop offset="1" stop-color="#dce6f6"/></linearGradient></defs><path d="M0.5 0.5h6.600l3.400 3.400v9.600h-10z" fill="url(#dg)" stroke="#7f93bf" stroke-width="1"/><path d="M0.500 4V0.500h6.600l3.400 3.400" fill="none" stroke="#c4a55e" stroke-width="1"/><path d="M7.100 0.700v3.200h3.200z" fill="#e8d5a0" stroke="#c4a55e" stroke-width="0.700"/><path d="M2.500 4.5h6" stroke="#8ea3cf" stroke-width="1"/><path d="M2.500 6.5h6" stroke="#8ea3cf" stroke-width="1"/><path d="M2.500 8.5h6" stroke="#8ea3cf" stroke-width="1"/><path d="M2.500 10.5h6" stroke="#8ea3cf" stroke-width="1"/><path d="M2.500 12.5h4" stroke="#8ea3cf" stroke-width="1"/></svg>
<span class="t" style="left:41.20px;top:573.04px;font-size:12px;color:#000;transform:scaleX(0.8540);">CPT_Stc</span>
<svg class="r" style="left:8px;top:593px;" width="8" height="10"><path d="M1.200 0.800l4.200 4.200-4.200 4.200" stroke="#9e9e9e" stroke-width="1.900" fill="none"/></svg>
<svg class="r" style="left:23px;top:590px;" width="12" height="15"><defs><linearGradient id="dg" x1="0" y1="0" x2="0" y2="1"><stop offset="0.35" stop-color="#fff"/><stop offset="1" stop-color="#dce6f6"/></linearGradient></defs><path d="M0.5 0.5h6.600l3.400 3.400v9.600h-10z" fill="url(#dg)" stroke="#7f93bf" stroke-width="1"/><path d="M0.500 4V0.500h6.600l3.400 3.400" fill="none" stroke="#c4a55e" stroke-width="1"/><path d="M7.100 0.700v3.200h3.200z" fill="#e8d5a0" stroke="#c4a55e" stroke-width="0.700"/><path d="M2.500 4.5h6" stroke="#8ea3cf" stroke-width="1"/><path d="M2.500 6.5h6" stroke="#8ea3cf" stroke-width="1"/><path d="M2.500 8.5h6" stroke="#8ea3cf" stroke-width="1"/><path d="M2.500 10.5h6" stroke="#8ea3cf" stroke-width="1"/><path d="M2.500 12.5h4" stroke="#8ea3cf" stroke-width="1"/></svg>
<span class="t" style="left:41.20px;top:591.04px;font-size:12px;color:#000;transform:scaleX(0.8694);">CPT_Str</span>
<svg class="r" style="left:8px;top:611px;" width="8" height="10"><path d="M1.200 0.800l4.200 4.200-4.200 4.200" stroke="#9e9e9e" stroke-width="1.900" fill="none"/></svg>
<svg class="r" style="left:23px;top:608px;" width="12" height="15"><defs><linearGradient id="dg" x1="0" y1="0" x2="0" y2="1"><stop offset="0.35" stop-color="#fff"/><stop offset="1" stop-color="#dce6f6"/></linearGradient></defs><path d="M0.5 0.5h6.600l3.400 3.400v9.600h-10z" fill="url(#dg)" stroke="#7f93bf" stroke-width="1"/><path d="M0.500 4V0.500h6.600l3.400 3.400" fill="none" stroke="#c4a55e" stroke-width="1"/><path d="M7.100 0.700v3.200h3.200z" fill="#e8d5a0" stroke="#c4a55e" stroke-width="0.700"/><path d="M2.500 4.5h6" stroke="#8ea3cf" stroke-width="1"/><path d="M2.500 6.5h6" stroke="#8ea3cf" stroke-width="1"/><path d="M2.500 8.5h6" stroke="#8ea3cf" stroke-width="1"/><path d="M2.500 10.5h6" stroke="#8ea3cf" stroke-width="1"/><path d="M2.500 12.5h4" stroke="#8ea3cf" stroke-width="1"/></svg>
<span class="t" style="left:41.20px;top:609.04px;font-size:12px;color:#000;transform:scaleX(0.8540);">CPT_T2t</span>
<div class="r" style="left:18px;top:624px;width:68px;height:18px;background:#d9d9d9;"></div>
<svg class="r" style="left:8px;top:629px;" width="8" height="10"><path d="M1.200 0.800l4.200 4.200-4.200 4.200" stroke="#9e9e9e" stroke-width="1.900" fill="none"/></svg>
<svg class="r" style="left:23px;top:626px;" width="12" height="15"><defs><linearGradient id="dg" x1="0" y1="0" x2="0" y2="1"><stop offset="0.35" stop-color="#fff"/><stop offset="1" stop-color="#dce6f6"/></linearGradient></defs><path d="M0.5 0.5h6.600l3.400 3.400v9.600h-10z" fill="url(#dg)" stroke="#7f93bf" stroke-width="1"/><path d="M0.500 4V0.500h6.600l3.400 3.400" fill="none" stroke="#c4a55e" stroke-width="1"/><path d="M7.100 0.700v3.200h3.200z" fill="#e8d5a0" stroke="#c4a55e" stroke-width="0.700"/><path d="M2.500 4.5h6" stroke="#8ea3cf" stroke-width="1"/><path d="M2.500 6.5h6" stroke="#8ea3cf" stroke-width="1"/><path d="M2.500 8.5h6" stroke="#8ea3cf" stroke-width="1"/><path d="M2.500 10.5h6" stroke="#8ea3cf" stroke-width="1"/><path d="M2.500 12.5h4" stroke="#8ea3cf" stroke-width="1"/></svg>
<span class="t" style="left:41.20px;top:627.04px;font-size:12px;color:#000;transform:scaleX(0.8288);">CPT_Tqs</span>
<svg class="r" style="left:8px;top:647px;" width="8" height="10"><path d="M1.200 0.800l4.200 4.200-4.200 4.200" stroke="#9e9e9e" stroke-width="1.900" fill="none"/></svg>
<svg class="r" style="left:23px;top:644px;" width="12" height="15"><defs><linearGradient id="dg" x1="0" y1="0" x2="0" y2="1"><stop offset="0.35" stop-color="#fff"/><stop offset="1" stop-color="#dce6f6"/></linearGradient></defs><path d="M0.5 0.5h6.600l3.400 3.400v9.600h-10z" fill="url(#dg)" stroke="#7f93bf" stroke-width="1"/><path d="M0.500 4V0.500h6.600l3.400 3.400" fill="none" stroke="#c4a55e" stroke-width="1"/><path d="M7.100 0.700v3.200h3.200z" fill="#e8d5a0" stroke="#c4a55e" stroke-width="0.700"/><path d="M2.500 4.5h6" stroke="#8ea3cf" stroke-width="1"/><path d="M2.500 6.5h6" stroke="#8ea3cf" stroke-width="1"/><path d="M2.500 8.5h6" stroke="#8ea3cf" stroke-width="1"/><path d="M2.500 10.5h6" stroke="#8ea3cf" stroke-width="1"/><path d="M2.500 12.5h4" stroke="#8ea3cf" stroke-width="1"/></svg>
<span class="t" style="left:41.20px;top:645.04px;font-size:12px;color:#000;transform:scaleX(0.8399);">CPT_Tvc</span>
<svg class="r" style="left:8px;top:665px;" width="8" height="10"><path d="M1.200 0.800l4.200 4.200-4.200 4.200" stroke="#9e9e9e" stroke-width="1.900" fill="none"/></svg>
<svg class="r" style="left:23px;top:662px;" width="12" height="15"><defs><linearGradient id="dg" x1="0" y1="0" x2="0" y2="1"><stop offset="0.35" stop-color="#fff"/><stop offset="1" stop-color="#dce6f6"/></linearGradient></defs><path d="M0.5 0.5h6.600l3.400 3.400v9.600h-10z" fill="url(#dg)" stroke="#7f93bf" stroke-width="1"/><path d="M0.500 4V0.500h6.600l3.400 3.400" fill="none" stroke="#c4a55e" stroke-width="1"/><path d="M7.100 0.700v3.200h3.200z" fill="#e8d5a0" stroke="#c4a55e" stroke-width="0.700"/><path d="M2.500 4.5h6" stroke="#8ea3cf" stroke-width="1"/><path d="M2.500 6.5h6" stroke="#8ea3cf" stroke-width="1"/><path d="M2.500 8.5h6" stroke="#8ea3cf" stroke-width="1"/><path d="M2.500 10.5h6" stroke="#8ea3cf" stroke-width="1"/><path d="M2.500 12.5h4" stroke="#8ea3cf" stroke-width="1"/></svg>
<span class="t" style="left:41.20px;top:663.04px;font-size:12px;color:#000;transform:scaleX(0.9293);">CPT_TvcActuator</span>
<svg class="r" style="left:8px;top:683px;" width="8" height="10"><path d="M1.200 0.800l4.200 4.200-4.200 4.200" stroke="#9e9e9e" stroke-width="1.900" fill="none"/></svg>
<svg class="r" style="left:23px;top:680px;" width="12" height="15"><defs><linearGradient id="dg" x1="0" y1="0" x2="0" y2="1"><stop offset="0.35" stop-color="#fff"/><stop offset="1" stop-color="#dce6f6"/></linearGradient></defs><path d="M0.5 0.5h6.600l3.400 3.400v9.600h-10z" fill="url(#dg)" stroke="#7f93bf" stroke-width="1"/><path d="M0.500 4V0.500h6.600l3.400 3.400" fill="none" stroke="#c4a55e" stroke-width="1"/><path d="M7.100 0.700v3.200h3.200z" fill="#e8d5a0" stroke="#c4a55e" stroke-width="0.700"/><path d="M2.500 4.5h6" stroke="#8ea3cf" stroke-width="1"/><path d="M2.500 6.5h6" stroke="#8ea3cf" stroke-width="1"/><path d="M2.500 8.5h6" stroke="#8ea3cf" stroke-width="1"/><path d="M2.500 10.5h6" stroke="#8ea3cf" stroke-width="1"/><path d="M2.500 12.5h4" stroke="#8ea3cf" stroke-width="1"/></svg>
<span class="t" style="left:41.20px;top:681.04px;font-size:12px;color:#000;transform:scaleX(0.8704);">CPT_Wcs</span>
<svg class="r" style="left:8px;top:701px;" width="8" height="10"><path d="M1.200 0.800l4.200 4.200-4.200 4.200" stroke="#9e9e9e" stroke-width="1.900" fill="none"/></svg>
<svg class="r" style="left:23px;top:698px;" width="12" height="15"><defs><linearGradient id="dg" x1="0" y1="0" x2="0" y2="1"><stop offset="0.35" stop-color="#fff"/><stop offset="1" stop-color="#dce6f6"/></linearGradient></defs><path d="M0.5 0.5h6.600l3.400 3.400v9.600h-10z" fill="url(#dg)" stroke="#7f93bf" stroke-width="1"/><path d="M0.500 4V0.500h6.600l3.400 3.400" fill="none" stroke="#c4a55e" stroke-width="1"/><path d="M7.100 0.700v3.200h3.200z" fill="#e8d5a0" stroke="#c4a55e" stroke-width="0.700"/><path d="M2.500 4.5h6" stroke="#8ea3cf" stroke-width="1"/><path d="M2.500 6.5h6" stroke="#8ea3cf" stroke-width="1"/><path d="M2.500 8.5h6" stroke="#8ea3cf" stroke-width="1"/><path d="M2.500 10.5h6" stroke="#8ea3cf" stroke-width="1"/><path d="M2.500 12.5h4" stroke="#8ea3cf" stroke-width="1"/></svg>
<span class="t" style="left:41.20px;top:699.04px;font-size:12px;color:#000;transform:scaleX(0.8962);">CPT_Wgc</span>
<div class="r" style="left:332px;top:174px;width:16px;height:551px;background:#f0f0f0;"></div>
<div class="r" style="left:332px;top:347px;width:15px;height:361px;background:#cdcdcd;"></div>
<svg class="r" style="left:334px;top:178px;" width="12" height="10"><path d="M2.600 6.800l3-3.400 3 3.400" stroke="#4a4a4a" stroke-width="2.200" fill="none"/></svg>
<svg class="r" style="left:334px;top:712px;" width="12" height="10"><path d="M2.600 3l3 3.400 3-3.400" stroke="#4a4a4a" stroke-width="2.200" fill="none"/></svg>
<div class="r" style="left:0px;top:729px;width:349px;height:253px;background:#e6e6fa;border:1px solid #c4c4c4;box-sizing:border-box;"></div>
<div class="r" style="left:1px;top:730px;width:347px;height:31px;background:#ececec;"></div>
<div class="r" style="left:1px;top:761px;width:347px;height:1px;background:#c4c4c4;"></div>
<div class="r" style="left:1px;top:730px;width:87px;height:32px;background:#fff;"></div>
<div class="r" style="left:88px;top:730px;width:1px;height:31px;background:#c4c4c4;"></div>
<span class="t" style="left:27.00px;top:739.64px;font-size:12px;color:#4a4a4a;transform:scaleX(1.0257);">Outline</span>
<svg class="r" style="left:72.7px;top:740.7px;" width="10" height="10"><path d="M1 1l7.5 7.5M8.5 1l-7.5 7.5" stroke="#000" stroke-width="2" fill="none"/></svg>
<svg class="r" style="left:308px;top:736px;" width="11" height="6"><rect x="0.5" y="0.5" width="9" height="3" rx="0.6" fill="#f0f0f0" stroke="#4c4c4c" stroke-width="1"/></svg><svg class="r" style="left:331px;top:736px;" width="11" height="11"><rect x="0.5" y="0.5" width="9" height="9" rx="0.6" fill="#f0f0f0" stroke="#4c4c4c" stroke-width="1"/><path d="M0.5 2.5h9" stroke="#4c4c4c" stroke-width="1"/></svg>
<div class="r" style="left:352px;top:951px;width:1048px;height:31px;background:#fff;"></div>
<div class="r" style="left:352px;top:950px;width:1048px;height:1px;background:#b5b5b5;"></div>
<div class="r" style="left:352px;top:981px;width:1048px;height:1px;background:#c9c9c9;"></div>
<div class="r" style="left:352px;top:950px;width:1px;height:32px;background:#c4c4c4;"></div>
<span class="t" style="left:357.00px;top:961.84px;font-size:12px;color:#000;transform:scaleX(0.9222);">Time Range: 0.032573699 - 16.999574732 [s]</span>
<div class="r" style="left:588px;top:959px;width:1px;height:17px;background:#555;"></div>
<span class="t" style="left:599.00px;top:961.84px;font-size:12px;color:#000;transform:scaleX(0.9497);">Cursor A:</span>
<div class="r" style="left:652px;top:958px;width:92px;height:20px;background:#f0f0f0;border:1px solid #cfcfcf;box-sizing:border-box;"></div>
<span class="t" style="left:658.00px;top:961.84px;font-size:12px;color:#8a8a8a;transform:scaleX(0.8991);">0.032573699</span>
<svg class="r" style="left:753px;top:962px;" width="36" height="12"><path d="M8 0.5v11l-8-5.5z" fill="#9b9b9b"/><rect x="9.5" y="0.5" width="3" height="11" fill="#9b9b9b"/><rect x="22" y="0.5" width="3" height="11" fill="#9b9b9b"/><path d="M27 0.5v11l8-5.5z" fill="#9b9b9b"/></svg>
<div class="r" style="left:796px;top:959px;width:1px;height:17px;background:#555;"></div>
<span class="t" style="left:806.50px;top:961.84px;font-size:12px;color:#000;transform:scaleX(0.9373);">Cursor B:</span>
<div class="r" style="left:859px;top:958px;width:92px;height:20px;background:#f0f0f0;border:1px solid #cfcfcf;box-sizing:border-box;"></div>
<span class="t" style="left:865.00px;top:961.84px;font-size:12px;color:#8a8a8a;transform:scaleX(0.8991);">0.032573699</span>
<svg class="r" style="left:959.5px;top:962px;" width="36" height="12"><path d="M8 0.5v11l-8-5.5z" fill="#9b9b9b"/><rect x="9.5" y="0.5" width="3" height="11" fill="#9b9b9b"/><rect x="22" y="0.5" width="3" height="11" fill="#9b9b9b"/><path d="M27 0.5v11l8-5.5z" fill="#9b9b9b"/></svg>
<div class="r" style="left:1003px;top:959px;width:1px;height:17px;background:#555;"></div>
<span class="t" style="left:1019.00px;top:960.84px;font-size:12px;color:#000;transform:scaleX(0.9631);">Step by: All Samples</span>
<span class="t" style="left:1131.50px;top:960.84px;font-size:12px;color:#000;transform:scaleX(0.9285);">Reference:</span>
<span class="t" style="left:1189.00px;top:960.84px;font-size:12px;color:#b9b9b9;transform:scaleX(0.9812);">All labels displaying a value</span>
<svg class="r" style="left:1379px;top:960px;" width="16" height="16"><circle cx="8" cy="8" r="6.6" fill="#fff" stroke="#2d66b3" stroke-width="1.3"/><text x="8" y="11.8" font-family="Liberation Sans" font-weight="700" font-size="10.5" text-anchor="middle" fill="#2d66b3">?</text></svg>
<span class="t" style="left:8.00px;top:989.84px;font-size:12px;color:#000;transform:scaleX(0.9200);">EHANDBOOK_NAVIGATOR License</span>
<svg class="r" style="left:197px;top:989px;" width="3" height="16"><rect x="0.5" y="0.5" width="1.5" height="1.5" fill="#c3c3c3"/><rect x="0.5" y="4.5" width="1.5" height="1.5" fill="#c3c3c3"/><rect x="0.5" y="8.5" width="1.5" height="1.5" fill="#c3c3c3"/><rect x="0.5" y="12.5" width="1.5" height="1.5" fill="#c3c3c3"/></svg>
<span class="t" style="left:205.00px;top:989.84px;font-size:12px;color:#000;transform:scaleX(0.9424);">Data Source:</span>
<div class="r" style="left:276px;top:986px;width:207px;height:20px;background:#fff;border:1px solid #adadad;box-sizing:border-box;"></div>
<span class="t" style="left:280.50px;top:989.84px;font-size:12px;color:#000;transform:scaleX(0.9807);">Measurement and Calibration Files</span>
<svg class="r" style="left:466px;top:993px;" width="10" height="6"><path d="M1 1h7.4l-3.7 4z" fill="#222"/></svg>
<div class="r" style="left:534px;top:987px;width:1px;height:18px;background:#777;"></div>
<svg class="r" style="left:657px;top:989px;" width="3" height="16"><rect x="0.5" y="0.5" width="1.5" height="1.5" fill="#c3c3c3"/><rect x="0.5" y="4.5" width="1.5" height="1.5" fill="#c3c3c3"/><rect x="0.5" y="8.5" width="1.5" height="1.5" fill="#c3c3c3"/><rect x="0.5" y="12.5" width="1.5" height="1.5" fill="#c3c3c3"/></svg>
<svg class="r" style="left:1231px;top:989px;" width="3" height="16"><rect x="0.5" y="0.5" width="1.5" height="1.5" fill="#c3c3c3"/><rect x="0.5" y="4.5" width="1.5" height="1.5" fill="#c3c3c3"/><rect x="0.5" y="8.5" width="1.5" height="1.5" fill="#c3c3c3"/><rect x="0.5" y="12.5" width="1.5" height="1.5" fill="#c3c3c3"/></svg>
<div class="r" style="left:1306px;top:985px;width:1px;height:21px;background:#8a8a8a;"></div>
<svg class="r" style="left:353px;top:108px" width="1046" height="842" viewBox="353 108 1046 842"><defs><linearGradient id="gsq" x1="0" y1="0" x2="1" y2="1"><stop offset="0" stop-color="#ff8250"/><stop offset=".55" stop-color="#fb4a1a"/><stop offset="1" stop-color="#ee2a00"/></linearGradient><linearGradient id="goc" x1="0.1" y1="0" x2="0.8" y2="1"><stop offset="0" stop-color="#9fd6f7"/><stop offset=".5" stop-color="#3f97e2"/><stop offset="1" stop-color="#1565c8"/></linearGradient></defs><rect x="405.5" y="183" width="281" height="76" fill="#e0ebfd" stroke="#000" stroke-width="1"/><rect x="406.5" y="184" width="279" height="74" fill="none" stroke="#f0f8ff" stroke-width="1"/><path d="M405 183H687M405 259H687" stroke="#000" stroke-width="0.4" fill="none"/><rect x="627" y="260" width="60" height="14.6" fill="#558fdc"/><rect x="767.5" y="183" width="281" height="371" fill="#e0ebfd" stroke="#000" stroke-width="1"/><rect x="768.5" y="184" width="279" height="369" fill="none" stroke="#f0f8ff" stroke-width="1"/><path d="M767 183H1049M767 554H1049" stroke="#000" stroke-width="0.4" fill="none"/><rect x="1000.5" y="555" width="48.5" height="14.6" fill="#558fdc"/><rect x="1129.5" y="340.5" width="199" height="56" fill="#e0ebfd" stroke="#000" stroke-width="1"/><rect x="1130.5" y="341.5" width="197" height="54" fill="none" stroke="#f0f8ff" stroke-width="1"/><path d="M1129 340.5H1329M1129 396.5H1329" stroke="#000" stroke-width="0.4" fill="none"/><rect x="1269" y="397" width="60" height="14.6" fill="#558fdc"/><rect x="1129.5" y="517" width="199" height="123" fill="#e0ebfd" stroke="#000" stroke-width="1"/><rect x="1130.5" y="518" width="197" height="121" fill="none" stroke="#f0f8ff" stroke-width="1"/><path d="M1129 517H1329M1129 640H1329" stroke="#000" stroke-width="0.4" fill="none"/><rect x="1269" y="641" width="60" height="14.6" fill="#558fdc"/><rect x="487.5" y="564" width="199" height="76" fill="#e0ebfd" stroke="#000" stroke-width="1"/><rect x="488.5" y="565" width="197" height="74" fill="none" stroke="#f0f8ff" stroke-width="1"/><path d="M487 564H687M487 640H687" stroke="#000" stroke-width="0.4" fill="none"/><rect x="627" y="641" width="60" height="14.6" fill="#558fdc"/><path d="M717 202.25H737" fill="none" stroke="#1a1a1a" stroke-width="1.15"/><path d="M717 583.2H1099" fill="none" stroke="#1a1a1a" stroke-width="1.15"/><path d="M727 583.2V274Q727 269.25 732 269.25H737" fill="none" stroke="#1a1a1a" stroke-width="1.15"/><path d="M1079 360H1099" fill="none" stroke="#1a1a1a" stroke-width="1.15"/><path d="M1089 360V531.4Q1089 536.4 1094 536.4H1099" fill="none" stroke="#1a1a1a" stroke-width="1.15"/><path d="M727 579.2l4 4l-4 4l-4-4z" fill="#000"/><path d="M1089 356l4 4l-4 4l-4-4z" fill="#000"/><path d="M686.5 192.25H707.5L717 202.25L707.5 212.25H686.5Z" fill="#fff" stroke="#1a1a1a" stroke-width="1.15" stroke-linejoin="miter"/><polygon points="694.242,195.35 699.958,195.35 704,199.392 704,205.108 699.958,209.15 694.242,209.15 690.2,205.108 690.2,199.392" fill="url(#goc)" stroke="#6a78c8" stroke-opacity=".6" stroke-width="1"/><path d="M737 192.25H758L767.5 202.25L758 212.25H737Z" fill="#fff" stroke="#1a1a1a" stroke-width="1.15" stroke-linejoin="miter"/><polygon points="744.742,195.35 750.458,195.35 754.5,199.392 754.5,205.108 750.458,209.15 744.742,209.15 740.7,205.108 740.7,199.392" fill="url(#goc)" stroke="#6a78c8" stroke-opacity=".6" stroke-width="1"/><path d="M737 259.25H758L767.5 269.25L758 279.25H737Z" fill="#fff" stroke="#1a1a1a" stroke-width="1.15" stroke-linejoin="miter"/><rect x="741.3" y="262.95" width="12.6" height="12.6" rx="1.800" fill="url(#gsq)" stroke="#4d44b8" stroke-opacity=".600" stroke-width="1"/><path d="M737 326.25H758L767.5 336.25L758 346.25H737Z" fill="#fff" stroke="#1a1a1a" stroke-width="1.15" stroke-linejoin="miter"/><rect x="741.3" y="329.95" width="12.6" height="12.6" rx="1.800" fill="url(#gsq)" stroke="#4d44b8" stroke-opacity=".600" stroke-width="1"/><path d="M737 393.25H758L767.5 403.25L758 413.25H737Z" fill="#fff" stroke="#1a1a1a" stroke-width="1.15" stroke-linejoin="miter"/><rect x="741.3" y="396.95" width="12.6" height="12.6" rx="1.800" fill="url(#gsq)" stroke="#4d44b8" stroke-opacity=".600" stroke-width="1"/><path d="M737 440.25H758L767.5 450.25L758 460.25H737Z" fill="#fff" stroke="#1a1a1a" stroke-width="1.15" stroke-linejoin="miter"/><rect x="741.3" y="443.95" width="12.6" height="12.6" rx="1.800" fill="url(#gsq)" stroke="#4d44b8" stroke-opacity=".600" stroke-width="1"/><path d="M737 507.25H758L767.5 517.25L758 527.25H737Z" fill="#fff" stroke="#1a1a1a" stroke-width="1.15" stroke-linejoin="miter"/><rect x="741.3" y="510.95" width="12.6" height="12.6" rx="1.800" fill="url(#gsq)" stroke="#4d44b8" stroke-opacity=".600" stroke-width="1"/><path d="M1048.5 350H1069.5L1079 360L1069.5 370H1048.5Z" fill="#fff" stroke="#1a1a1a" stroke-width="1.15" stroke-linejoin="miter"/><rect x="1052.8" y="353.7" width="12.6" height="12.6" rx="1.800" fill="url(#gsq)" stroke="#4d44b8" stroke-opacity=".600" stroke-width="1"/><path d="M1099 350H1120L1129.5 360L1120 370H1099Z" fill="#fff" stroke="#1a1a1a" stroke-width="1.15" stroke-linejoin="miter"/><rect x="1103.3" y="353.7" width="12.6" height="12.6" rx="1.800" fill="url(#gsq)" stroke="#4d44b8" stroke-opacity=".600" stroke-width="1"/><path d="M1099 526.4H1120L1129.5 536.4L1120 546.4H1099Z" fill="#fff" stroke="#1a1a1a" stroke-width="1.15" stroke-linejoin="miter"/><rect x="1103.3" y="530.1" width="12.6" height="12.6" rx="1.800" fill="url(#gsq)" stroke="#4d44b8" stroke-opacity=".600" stroke-width="1"/><path d="M1099 573.2H1120L1129.5 583.2L1120 593.2H1099Z" fill="#fff" stroke="#1a1a1a" stroke-width="1.15" stroke-linejoin="miter"/><rect x="1103.3" y="576.9" width="12.6" height="12.6" rx="1.800" fill="url(#gsq)" stroke="#4d44b8" stroke-opacity=".600" stroke-width="1"/><path d="M686.5 573.2H707.5L717 583.2L707.5 593.2H686.5Z" fill="#fff" stroke="#1a1a1a" stroke-width="1.15" stroke-linejoin="miter"/><rect x="690.8" y="576.9" width="12.6" height="12.6" rx="1.800" fill="url(#gsq)" stroke="#4d44b8" stroke-opacity=".600" stroke-width="1"/><rect x="546.5" y="209.75" width="135" height="20" fill="#fff" stroke="#b7b7b7" stroke-width="1"/><rect x="546.5" y="229.75" width="135" height="20" fill="#fff" stroke="#b7b7b7" stroke-width="1"/><rect x="772.5" y="209.75" width="135" height="20" fill="#fff" stroke="#b7b7b7" stroke-width="1"/><rect x="772.5" y="229.75" width="135" height="20" fill="#fff" stroke="#b7b7b7" stroke-width="1"/><rect x="772.5" y="276.75" width="81" height="20" fill="#fff" stroke="#b7b7b7" stroke-width="1"/><rect x="772.5" y="296.75" width="81" height="20" fill="#fff" stroke="#b7b7b7" stroke-width="1"/><rect x="772.5" y="343.75" width="66" height="20" fill="#fff" stroke="#b7b7b7" stroke-width="1"/><rect x="772.5" y="363.75" width="66" height="20" fill="#fff" stroke="#b7b7b7" stroke-width="1"/><rect x="772.5" y="410.75" width="86" height="20" fill="#fff" stroke="#b7b7b7" stroke-width="1"/><rect x="772.5" y="457.75" width="63" height="20" fill="#fff" stroke="#b7b7b7" stroke-width="1"/><rect x="772.5" y="477.75" width="63" height="20" fill="#fff" stroke="#b7b7b7" stroke-width="1"/><rect x="772.5" y="524.75" width="99" height="20" fill="#fff" stroke="#b7b7b7" stroke-width="1"/><rect x="987.5" y="367.5" width="56" height="20" fill="#fff" stroke="#b7b7b7" stroke-width="1"/><rect x="1134.5" y="367.5" width="56" height="20" fill="#fff" stroke="#b7b7b7" stroke-width="1"/><rect x="1134.5" y="543.9" width="56" height="20" fill="#fff" stroke="#b7b7b7" stroke-width="1"/><rect x="1134.5" y="590.7" width="81" height="20" fill="#fff" stroke="#b7b7b7" stroke-width="1"/><rect x="1134.5" y="610.7" width="81" height="20" fill="#fff" stroke="#b7b7b7" stroke-width="1"/><rect x="644.5" y="577.5" width="37.5" height="12" fill="#c3edfb"/><rect x="600.5" y="590.7" width="81" height="20" fill="#fff" stroke="#b7b7b7" stroke-width="1"/><rect x="600.5" y="610.7" width="81" height="20" fill="#fff" stroke="#b7b7b7" stroke-width="1"/></svg>
<span class="t" style="left:612.00px;top:196.69px;font-size:11px;color:#1212f0;transform:scaleX(0.9088);-webkit-text-stroke:0.25px #1212f0;">PP_TqsParams</span>
<span class="t" style="left:549.00px;top:214.04px;font-size:11px;color:#1212f0;transform:scaleX(0.9806);-webkit-text-stroke:0.25px #1212f0;">Tqs_flgTorqueReqOverride</span>
<span class="t" style="left:549.00px;top:234.04px;font-size:11px;color:#1212f0;transform:scaleX(0.9441);-webkit-text-stroke:0.25px #1212f0;">Tqs_tqReqMan</span>
<span class="t" style="left:772.00px;top:196.69px;font-size:11px;color:#1212f0;transform:scaleX(0.9017);-webkit-text-stroke:0.25px #1212f0;">RP_TqsParams</span>
<span class="t" style="left:775.00px;top:214.04px;font-size:11px;color:#1212f0;transform:scaleX(0.9806);-webkit-text-stroke:0.25px #1212f0;">Tqs_flgTorqueReqOverride</span>
<span class="t" style="left:775.00px;top:234.04px;font-size:11px;color:#1212f0;transform:scaleX(0.9441);-webkit-text-stroke:0.25px #1212f0;">Tqs_tqReqMan</span>
<span class="t" style="left:772.00px;top:263.69px;font-size:11px;color:#1212f0;transform:scaleX(0.9156);-webkit-text-stroke:0.25px #1212f0;">RP_Amf</span>
<span class="t" style="left:775.00px;top:281.04px;font-size:11px;color:#1212f0;transform:scaleX(0.9531);-webkit-text-stroke:0.25px #1212f0;">Amf_facRelAir</span>
<span class="t" style="left:775.00px;top:301.04px;font-size:11px;color:#1212f0;transform:scaleX(0.9477);-webkit-text-stroke:0.25px #1212f0;">Amf_mAirPerStr</span>
<span class="t" style="left:772.00px;top:330.69px;font-size:11px;color:#1212f0;transform:scaleX(0.8673);-webkit-text-stroke:0.25px #1212f0;">RP_Egc</span>
<span class="t" style="left:775.00px;top:348.04px;font-size:11px;color:#1212f0;transform:scaleX(0.9318);-webkit-text-stroke:0.25px #1212f0;">Egc_facEgas</span>
<span class="t" style="left:775.00px;top:368.04px;font-size:11px;color:#1212f0;transform:scaleX(0.9536);-webkit-text-stroke:0.25px #1212f0;">Egc_flgError</span>
<span class="t" style="left:772.00px;top:397.69px;font-size:11px;color:#1212f0;transform:scaleX(0.8860);-webkit-text-stroke:0.25px #1212f0;">RP_Epm</span>
<span class="t" style="left:775.00px;top:415.04px;font-size:11px;color:#1212f0;transform:scaleX(0.9179);-webkit-text-stroke:0.25px #1212f0;">Epm_rpmEngSpd</span>
<span class="t" style="left:772.00px;top:444.69px;font-size:11px;color:#1212f0;transform:scaleX(0.9050);-webkit-text-stroke:0.25px #1212f0;">RP_Ctc</span>
<span class="t" style="left:775.00px;top:462.04px;font-size:11px;color:#1212f0;transform:scaleX(0.9685);-webkit-text-stroke:0.25px #1212f0;">Ctc_atCool</span>
<span class="t" style="left:775.00px;top:482.04px;font-size:11px;color:#1212f0;transform:scaleX(0.9765);-webkit-text-stroke:0.25px #1212f0;">Ctc_flgError</span>
<span class="t" style="left:772.00px;top:511.69px;font-size:11px;color:#1212f0;transform:scaleX(0.9110);-webkit-text-stroke:0.25px #1212f0;">RP_Isc</span>
<span class="t" style="left:775.00px;top:529.04px;font-size:11px;color:#1212f0;transform:scaleX(0.9780);-webkit-text-stroke:0.25px #1212f0;">Isc_facIdleSpdStab</span>
<span class="t" style="left:1009.00px;top:354.44px;font-size:11px;color:#1212f0;transform:scaleX(0.8945);-webkit-text-stroke:0.25px #1212f0;">PP_Tqs</span>
<span class="t" style="left:990.00px;top:371.79px;font-size:11px;color:#1212f0;transform:scaleX(0.9657);-webkit-text-stroke:0.25px #1212f0;">Stc_tqReq</span>
<span class="t" style="left:1134.00px;top:354.44px;font-size:11px;color:#1212f0;transform:scaleX(0.8959);-webkit-text-stroke:0.25px #1212f0;">RP_Tqs</span>
<span class="t" style="left:1137.00px;top:371.79px;font-size:11px;color:#1212f0;transform:scaleX(0.9657);-webkit-text-stroke:0.25px #1212f0;">Stc_tqReq</span>
<span class="t" style="left:1134.00px;top:530.84px;font-size:11px;color:#1212f0;transform:scaleX(0.8959);-webkit-text-stroke:0.25px #1212f0;">RP_Tqs</span>
<span class="t" style="left:1137.00px;top:548.19px;font-size:11px;color:#1212f0;transform:scaleX(0.9657);-webkit-text-stroke:0.25px #1212f0;">Stc_tqReq</span>
<span class="t" style="left:1134.00px;top:577.64px;font-size:11px;color:#1212f0;transform:scaleX(0.9156);-webkit-text-stroke:0.25px #1212f0;">RP_Amf</span>
<span class="t" style="left:1137.00px;top:594.99px;font-size:11px;color:#1212f0;transform:scaleX(0.9531);-webkit-text-stroke:0.25px #1212f0;">Amf_facRelAir</span>
<span class="t" style="left:1137.00px;top:614.99px;font-size:11px;color:#1212f0;transform:scaleX(0.9477);-webkit-text-stroke:0.25px #1212f0;">Amf_mAirPerStr</span>
<span class="t" style="left:645.40px;top:577.64px;font-size:11px;color:#1212f0;transform:scaleX(0.9071);-webkit-text-stroke:0.25px #1212f0;">PP_Amf</span>
<span class="t" style="left:603.00px;top:594.99px;font-size:11px;color:#1212f0;transform:scaleX(0.9531);-webkit-text-stroke:0.25px #1212f0;">Amf_facRelAir</span>
<span class="t" style="left:603.00px;top:614.99px;font-size:11px;color:#1212f0;transform:scaleX(0.9477);-webkit-text-stroke:0.25px #1212f0;">Amf_mAirPerStr</span>
<span class="t" style="left:507.00px;top:265.09px;font-size:11px;color:#1212f0;transform:scaleX(0.9128);-webkit-text-stroke:0.25px #1212f0;">CPT_TqsParams</span>
<span class="t" style="left:887.00px;top:559.69px;font-size:11px;color:#1212f0;transform:scaleX(0.8933);-webkit-text-stroke:0.25px #1212f0;">CPT_Tqs</span>
<span class="t" style="left:1208.50px;top:403.39px;font-size:11px;color:#1212f0;transform:scaleX(0.9157);-webkit-text-stroke:0.25px #1212f0;">CPT_T2t</span>
<span class="t" style="left:1206.00px;top:646.69px;font-size:11px;color:#1212f0;transform:scaleX(0.8889);-webkit-text-stroke:0.25px #1212f0;">CPT_Fmc</span>
<span class="t" style="left:565.00px;top:646.39px;font-size:11px;color:#1212f0;transform:scaleX(0.9082);-webkit-text-stroke:0.25px #1212f0;">CPT_Amf</span>
<span class="t" style="left:631.00px;top:261.20px;font-size:13px;color:#fff;transform:scaleX(0.9804);">Compact</span>
<span class="t" style="left:1004.50px;top:556.20px;font-size:13px;color:#fff;transform:scaleX(0.9428);">Normal</span>
<span class="t" style="left:1273.00px;top:398.20px;font-size:13px;color:#fff;transform:scaleX(0.9804);">Compact</span>
<span class="t" style="left:1273.00px;top:642.20px;font-size:13px;color:#fff;transform:scaleX(0.9804);">Compact</span>
<span class="t" style="left:631.00px;top:642.20px;font-size:13px;color:#fff;transform:scaleX(0.9804);">Compact</span>
<div class="r" style="left:709px;top:658px;width:465px;height:271px;background:#f0f0f0;border:1px solid #707070;box-sizing:border-box;box-shadow:0 4px 14px 2px rgba(0,0,0,.28),0 0 3px rgba(0,0,0,.18);"></div>
<div class="r" style="left:710px;top:659px;width:463px;height:30px;background:#fff;"></div>
<svg class="r" style="left:719px;top:666.5px;" width="14" height="14"><defs><linearGradient id="pg719_666" x1="0" y1="0" x2="1" y2="1"><stop offset="0" stop-color="#ff8250"/><stop offset=".55" stop-color="#fb4a1a"/><stop offset="1" stop-color="#ee2a00"/></linearGradient></defs><rect x="0.5" y="0.5" width="13" height="13" rx="2" fill="url(#pg719_666)" stroke="#5b55c8" stroke-opacity=".5"/></svg>
<span class="t" style="left:739.30px;top:667.84px;font-size:12px;color:#000;transform:scaleX(0.9428);">PP_Amf</span>
<svg class="r" style="left:1050px;top:664px;" width="110" height="18"><path d="M4 9.5h10" stroke="#c8c8c8"/><rect x="49.5" y="4.5" width="9" height="9" fill="none" stroke="#000"/><path d="M95.2 4.2l9.6 9.6M104.800 4.200l-9.600 9.600" stroke="#000" stroke-width="1.1"/></svg>
<svg class="r" style="left:721px;top:696.5px;" width="14" height="14"><defs><linearGradient id="pg721_696" x1="0" y1="0" x2="1" y2="1"><stop offset="0" stop-color="#ff8250"/><stop offset=".55" stop-color="#fb4a1a"/><stop offset="1" stop-color="#ee2a00"/></linearGradient></defs><rect x="0.5" y="0.5" width="13" height="13" rx="2" fill="url(#pg721_696)" stroke="#5b55c8" stroke-opacity=".5"/></svg>
<span class="t" style="left:741.30px;top:697.02px;font-size:12.5px;color:#111;transform:scaleX(0.8554);font-weight:700;font-family:'Liberation Mono',monospace;">PP_Amf</span>
<svg class="r" style="left:786px;top:695px;" width="15" height="16"><rect x="1.5" y="2.5" width="11" height="12.5" rx="1" fill="#e9c98a" stroke="#b08a42"/><rect x="4.5" y="0.8" width="5" height="3.2" rx="1" fill="#d8d8d8" stroke="#8d8d8d" stroke-width=".8"/><path d="M6.5 5.5h5.5l2 2v7.5h-7.5z" fill="#fff" stroke="#8a98b8" stroke-width=".9"/><path d="M8 9.5h4.5M8 11.5h4.5M8 13.5h3" stroke="#7f95c8" stroke-width=".9"/></svg>
<span class="t" style="left:720.30px;top:716.04px;font-size:12px;color:#8a8a8a;transform:scaleX(0.9829);">No description available.</span>
<div class="r" style="left:710px;top:740px;width:463px;height:1px;background:#b4b4b4;"></div>
<div class="r" style="left:720px;top:752px;width:435px;height:133px;background:#fff;border:1px solid #adadad;box-sizing:border-box;"></div>
<div class="r" style="left:721px;top:753px;width:177px;height:131px;background:#d4d4d4;"></div>
<div class="r" style="left:897px;top:753px;width:1px;height:131px;background:#c9c9c9;"></div>
<div class="r" style="left:721px;top:771px;width:433px;height:1px;background:#adadad;"></div>
<div class="r" style="left:721px;top:847px;width:433px;height:1px;background:#adadad;"></div>
<svg class="r" style="left:727px;top:755px;" width="14" height="13"><rect x="0.5" y="1.5" width="5.5" height="10" fill="#fff" stroke="#1f5aa8"/><path d="M7 6.5h4" stroke="#1f5aa8" stroke-width="1.2"/><path d="M10 3.8l3.200 2.700-3.200 2.700z" fill="#1f5aa8"/></svg>
<svg class="r" style="left:727px;top:775px;" width="14" height="13"><rect x="7.5" y="1.5" width="5.5" height="10" fill="#fff" stroke="#1f5aa8"/><path d="M0 6.500h4" stroke="#1f5aa8" stroke-width="1.200"/><path d="M3 3.800l3.200 2.700-3.200 2.700z" fill="#1f5aa8"/></svg>
<svg class="r" style="left:727px;top:851px;" width="14" height="14"><path d="M0.5 2.5h5M3.4 0.5l2.3 2-2.3 2M8 2.5h5.5M5.5 5v7.5h3M5.5 8.5h3" stroke="#1f5aa8" fill="none" stroke-width="1.1"/><rect x="8.5" y="6.5" width="3" height="3" fill="#1f5aa8"/><rect x="8.5" y="10.5" width="3" height="3" fill="#1f5aa8"/></svg>
<span class="t" style="left:748.30px;top:756.00px;font-size:13px;color:#000;transform:scaleX(0.9186);">Exporting Function(s)</span>
<span class="t" style="left:748.30px;top:775.20px;font-size:13px;color:#000;transform:scaleX(0.9363);">Importing Function(s)</span>
<span class="t" style="left:748.30px;top:851.20px;font-size:13px;color:#000;transform:scaleX(0.9180);">Interface Elements</span>
<span class="t" style="left:904.40px;top:755.92px;font-size:12.5px;color:#2b7ac4;transform:scaleX(0.8627);font-family:'Liberation Mono',monospace;">CPT_Amf</span>
<span class="t" style="left:904.40px;top:775.12px;font-size:12.5px;color:#2b7ac4;transform:scaleX(0.8627);font-family:'Liberation Mono',monospace;">CPT_Afr</span>
<span class="t" style="left:904.40px;top:793.42px;font-size:12.5px;color:#2b7ac4;transform:scaleX(0.8627);font-family:'Liberation Mono',monospace;">CPT_Fmc</span>
<span class="t" style="left:904.40px;top:811.42px;font-size:12.5px;color:#2b7ac4;transform:scaleX(0.8627);font-family:'Liberation Mono',monospace;">CPT_Iac</span>
<svg class="r" style="left:906px;top:831px;" width="12" height="12"><circle cx="6" cy="6" r="5.6" fill="#d0d0d0"/><path d="M2.6 6h5.2M5.8 3.4l2.7 2.6-2.7 2.6" stroke="#111" stroke-width="1.5" fill="none"/></svg>
<span class="t" style="left:925.00px;top:830.20px;font-size:13px;color:#2b7ac4;transform:scaleX(0.9371);">Show All (4)</span>
<svg class="r" style="left:906px;top:851.5px;" width="12" height="12"><circle cx="6" cy="6" r="5.6" fill="#d0d0d0"/><path d="M3.6 8.4l4.2-4.2M4.6 3.8h3.6v3.6" stroke="#111" stroke-width="1.5" fill="none"/></svg>
<span class="t" style="left:925.00px;top:851.42px;font-size:12.5px;color:#2b7ac4;transform:scaleX(0.8780);font-family:'Liberation Mono',monospace;">PP_Amf.Amf_mAirPerStr</span>
<svg class="r" style="left:906px;top:869.5px;" width="12" height="12"><circle cx="6" cy="6" r="5.6" fill="#d0d0d0"/><path d="M3.6 8.4l4.2-4.2M4.6 3.8h3.6v3.6" stroke="#111" stroke-width="1.5" fill="none"/></svg>
<span class="t" style="left:925.00px;top:869.12px;font-size:12.5px;color:#2b7ac4;transform:scaleX(0.8765);font-family:'Liberation Mono',monospace;">PP_Amf.Amf_facRelAir</span>
<svg class="r" style="left:722px;top:900.5px;" width="12" height="12"><circle cx="6" cy="6" r="5.6" fill="#d0d0d0"/><path d="M6 3v6M3 6h6" stroke="#111" stroke-width="1.6" fill="none"/></svg>
<span class="t" style="left:741.30px;top:899.30px;font-size:13px;color:#2b7ac4;transform:scaleX(0.8947);">More</span>
<svg class="r" style="left:2px;top:3px;" width="16" height="16"><path d="M2.8 0.7h9.6q1.3 0 1.3 1.4" fill="none" stroke="#12695f" stroke-width="1.3"/><path d="M2.8 0.7Q0.8 0.9 0.8 2.6v4q0 .8 .6 .8v4.2q0 1.2 1.6 1.2" fill="#dff1ee" stroke="#12695f" stroke-width="1.3"/><rect x="5.6" y="4.2" width="9.6" height="11.2" fill="#9a9a9a" opacity=".55"/><rect x="4.6" y="3.2" width="9.8" height="11.4" fill="#fff"/><rect x="5.3" y="3.8" width="8.4" height="10.2" fill="#d6efea" stroke="#1f877d" stroke-width="1"/><path d="M7.2 4.5h1.6l-.4 5.4 2-2.6 2.6-1.6v1.2l-2 1.4-1.3 2.3 1.6.6v1.4h-4.4z" fill="#1f877d"/><circle cx="10.6" cy="9.4" r="1" fill="#eaf7f5"/><path d="M3 3.4l2.3 .9-2.3 .9" fill="#1f877d"/><path d="M3 5.2l2.3 .9-2.3 .9" fill="#1f877d"/><path d="M3 7l2.3 .9-2.3 .9" fill="#1f877d"/><path d="M3 8.8l2.3 .9-2.3 .9" fill="#1f877d"/><path d="M3 10.6l2.3 .9-2.3 .9" fill="#1f877d"/><path d="M3 12.4l2.3 .9-2.3 .9" fill="#1f877d"/></svg>
<svg class="r" style="left:1380px;top:51px;" width="16" height="16"><path d="M2.8 0.7h9.6q1.3 0 1.3 1.4" fill="none" stroke="#12695f" stroke-width="1.3"/><path d="M2.8 0.7Q0.8 0.9 0.8 2.6v4q0 .8 .6 .8v4.2q0 1.2 1.6 1.2" fill="#dff1ee" stroke="#12695f" stroke-width="1.3"/><rect x="5.6" y="4.2" width="9.6" height="11.2" fill="#9a9a9a" opacity=".55"/><rect x="4.6" y="3.2" width="9.8" height="11.4" fill="#fff"/><rect x="5.3" y="3.8" width="8.4" height="10.2" fill="#d6efea" stroke="#1f877d" stroke-width="1"/><path d="M7.2 4.5h1.6l-.4 5.4 2-2.6 2.6-1.6v1.2l-2 1.4-1.3 2.3 1.6.6v1.4h-4.4z" fill="#1f877d"/><circle cx="10.6" cy="9.4" r="1" fill="#eaf7f5"/><path d="M3 3.4l2.3 .9-2.3 .9" fill="#1f877d"/><path d="M3 5.2l2.3 .9-2.3 .9" fill="#1f877d"/><path d="M3 7l2.3 .9-2.3 .9" fill="#1f877d"/><path d="M3 8.8l2.3 .9-2.3 .9" fill="#1f877d"/><path d="M3 10.6l2.3 .9-2.3 .9" fill="#1f877d"/><path d="M3 12.4l2.3 .9-2.3 .9" fill="#1f877d"/></svg>
<svg class="r" style="left:1px;top:52px;" width="3" height="16"><rect x="0.3" y="0.4" width="1.8" height="1.8" fill="#c9c9c9"/><rect x="0.3" y="4.4" width="1.8" height="1.8" fill="#c9c9c9"/><rect x="0.3" y="8.4" width="1.8" height="1.8" fill="#c9c9c9"/><rect x="0.3" y="12.4" width="1.8" height="1.8" fill="#c9c9c9"/></svg>
<svg class="r" style="left:144.5px;top:52px;" width="3" height="16"><rect x="0.3" y="0.4" width="1.8" height="1.8" fill="#c9c9c9"/><rect x="0.3" y="4.4" width="1.8" height="1.8" fill="#c9c9c9"/><rect x="0.3" y="8.4" width="1.8" height="1.8" fill="#c9c9c9"/><rect x="0.3" y="12.4" width="1.8" height="1.8" fill="#c9c9c9"/></svg>
<svg class="r" style="left:225.3px;top:52px;" width="3" height="16"><rect x="0.3" y="0.4" width="1.8" height="1.8" fill="#c9c9c9"/><rect x="0.3" y="4.4" width="1.8" height="1.8" fill="#c9c9c9"/><rect x="0.3" y="8.4" width="1.8" height="1.8" fill="#c9c9c9"/><rect x="0.3" y="12.4" width="1.8" height="1.8" fill="#c9c9c9"/></svg>
<svg class="r" style="left:636.3px;top:52px;" width="3" height="16"><rect x="0.3" y="0.4" width="1.8" height="1.8" fill="#c9c9c9"/><rect x="0.3" y="4.4" width="1.8" height="1.8" fill="#c9c9c9"/><rect x="0.3" y="8.4" width="1.8" height="1.8" fill="#c9c9c9"/><rect x="0.3" y="12.4" width="1.8" height="1.8" fill="#c9c9c9"/></svg>
<svg class="r" style="left:756.3px;top:52px;" width="3" height="16"><rect x="0.3" y="0.4" width="1.8" height="1.8" fill="#c9c9c9"/><rect x="0.3" y="4.4" width="1.8" height="1.8" fill="#c9c9c9"/><rect x="0.3" y="8.4" width="1.8" height="1.8" fill="#c9c9c9"/><rect x="0.3" y="12.4" width="1.8" height="1.8" fill="#c9c9c9"/></svg>
<svg class="r" style="left:1350.3px;top:52px;" width="3" height="16"><rect x="0.3" y="0.4" width="1.8" height="1.8" fill="#c9c9c9"/><rect x="0.3" y="4.4" width="1.8" height="1.8" fill="#c9c9c9"/><rect x="0.3" y="8.4" width="1.8" height="1.8" fill="#c9c9c9"/><rect x="0.3" y="12.4" width="1.8" height="1.8" fill="#c9c9c9"/></svg>
<svg class="r" style="left:9px;top:53.6px;" width="16" height="12"><defs><linearGradient id="fo" x1="0" y1="0" x2="0" y2="1"><stop offset="0" stop-color="#fff3c8"/><stop offset="1" stop-color="#f3c35c"/></linearGradient></defs><path d="M0.6 11V3.2l1.4-1.6h3.6l1.2 1.6h5v3" fill="url(#fo)" stroke="#bf7a2a" stroke-width="1.1"/><path d="M0.8 10.9L4.6 6.1H15L11 11.4H1.4z" fill="url(#fo)" stroke="#bf7a2a" stroke-width="1.1" stroke-linejoin="round"/></svg>
<svg class="r" style="left:32px;top:52px;" width="16" height="16"><rect x="0.6" y="0.6" width="14" height="14" rx="1.6" fill="#efefef" stroke="#a8a8a8" stroke-width="1.1"/><path d="M3.5 1.5v6h8.2v-6M4.5 14.4v-5h6.2v5M7.6 11v3.4" fill="none" stroke="#a8a8a8" stroke-width="1.1"/></svg>
<svg class="r" style="left:54px;top:51px;" width="15" height="16"><rect x="3.6" y="2.6" width="10" height="13" fill="#fff" stroke="#1f877d" stroke-width="1.2"/><rect x="1.6" y="0.6" width="10" height="13" fill="#f1faf8" stroke="#1f877d" stroke-width="1.2"/><path d="M0 2.2l2.6 1-2.6 1z" fill="#1f877d"/><path d="M0 5.2l2.6 1-2.6 1z" fill="#1f877d"/><path d="M0 8.2l2.6 1-2.6 1z" fill="#1f877d"/><path d="M0 11.2l2.6 1-2.6 1z" fill="#1f877d"/><path d="M6.6 2.4h1.6l.6 3.2h-2.8z" fill="#1f877d"/><path d="M6.2 7.5h2.6M6.2 9.5h2.6M6.2 11.3h2.6" stroke="#1f877d" stroke-width="1.1"/></svg>
<svg class="r" style="left:77px;top:51.5px;" width="16" height="16"><defs><linearGradient id="pr" x1="0" y1="0" x2="0" y2="1"><stop offset="0" stop-color="#fff"/><stop offset="1" stop-color="#9db4e4"/></linearGradient></defs><rect x="0.6" y="5.6" width="14" height="7.2" rx="1.8" fill="url(#pr)" stroke="#6e8fd2" stroke-width="1.1"/><path d="M1.4 12.4h12.4l-1 2.4h-10.4z" fill="#6484c8"/><path d="M3.5 8.6V0.6h5.2l3 2.6v5.4z" fill="#f4f7fd" stroke="#9aa3b8" stroke-width="1"/><path d="M3.5 3V0.6h5.2l3 2.6" fill="none" stroke="#c9a85e" stroke-width="1.1"/><path d="M8.7 0.6v2.6h3z" fill="#e5c678"/><path d="M5.2 4.6h5M5.2 6.6h5" stroke="#6f86c8" stroke-width="1.1"/></svg>
<svg class="r" style="left:100px;top:51px;" width="16" height="16"><path d="M13.4 3V0.7H1.6v14.6h11.8V12.2" fill="none" stroke="#1f877d" stroke-width="1.3"/><path d="M0 2.6l2.8 1-2.8 1z" fill="#1f877d"/><path d="M0 5.6l2.8 1-2.8 1z" fill="#1f877d"/><path d="M0 8.6l2.8 1-2.8 1z" fill="#1f877d"/><path d="M0 11.6l2.8 1-2.8 1z" fill="#1f877d"/><path d="M5 6.4h6.4V3.6L16 8l-4.6 4.4V9.6H5z" fill="#2f968c"/></svg>
<svg class="r" style="left:125px;top:51px;" width="13" height="15"><path d="M0.6 0.6h8l3.2 3.2v10.6H0.6z" fill="#f1f1f1" stroke="#9c9c9c" stroke-width="1.1"/><path d="M8.4 0.8v3.2h3.2" fill="#fff" stroke="#9c9c9c" stroke-width="1"/><path d="M5.6 5.2q.6 2.6 1.6 4.2t2.8 1.6M7.6 9.2Q5 10 3.6 11.8M5.6 5.2q-.3 1.6 1 3.4" fill="none" stroke="#9a9a9a" stroke-width="1"/></svg>
<svg class="r" style="left:153px;top:52.5px;" width="15" height="13"><path d="M0.6 6.5L6.2 0.7v3.2h7.6v5.2H6.2v3.2z" fill="#f3f3f3" stroke="#b4b4b4" stroke-width="1.1" stroke-linejoin="round"/></svg>
<svg class="r" style="left:175px;top:57px;" width="8" height="5"><path d="M0.2 0.3h7.2l-3.6 4z" fill="#6e6e6e"/></svg>
<svg class="r" style="left:191px;top:52.5px;" width="15" height="13"><path d="M0.6 6.5L6.2 0.7v3.2h7.6v5.2H6.2v3.2z" transform="translate(14.4,0) scale(-1,1)" fill="#f3f3f3" stroke="#b4b4b4" stroke-width="1.1" stroke-linejoin="round"/></svg>
<svg class="r" style="left:213px;top:57px;" width="8" height="5"><path d="M0.2 0.3h7.2l-3.6 4z" fill="#6e6e6e"/></svg>
<svg class="r" style="left:494px;top:52px;" width="15" height="15"><circle cx="5.6" cy="5.6" r="4.6" fill="#f7f7f7" stroke="#c6c6c6" stroke-width="1.3"/><path d="M9 9l4.6 4.6" stroke="#a9a9a9" stroke-width="2" stroke-linecap="round"/></svg>
<svg class="r" style="left:594px;top:51.5px;" width="13" height="15"><path d="M6.5 14.4L0.7 8.2h3.2V0.6h5.2v7.6h3.2z" fill="#f1f1f1" stroke="#ababab" stroke-width="1.1" stroke-linejoin="round"/></svg>
<svg class="r" style="left:617px;top:51.5px;" width="13" height="15"><path d="M6.5 14.4L0.7 8.2h3.2V0.6h5.2v7.6h3.2z" transform="translate(0,15) scale(1,-1)" fill="#f1f1f1" stroke="#ababab" stroke-width="1.1" stroke-linejoin="round"/></svg>
<svg class="r" style="left:644px;top:52px;" width="16" height="15"><defs><linearGradient id="cb" x1="0" y1="0" x2="1" y2="0"><stop offset="0" stop-color="#fff"/><stop offset="1" stop-color="#c7dcf2"/></linearGradient></defs><path d="M7 12.6H4.6V0.6h6v6.2" fill="url(#cb)" stroke="#1c55a6" stroke-width="1.3"/><rect x="5.4" y="1.4" width="4.6" height="9" fill="url(#cb)"/><path d="M0 2.5H4.3M2.7 0.9l1.6 1.6-1.6 1.6" stroke="#1c55a6" stroke-width="1.2" fill="none"/><path d="M0 6.5H4.3M2.7 4.9l1.6 1.6-1.6 1.6" stroke="#1c55a6" stroke-width="1.2" fill="none"/><path d="M0 10.5H4.3M2.7 8.9l1.6 1.6-1.6 1.6" stroke="#1c55a6" stroke-width="1.2" fill="none"/><path d="M10.6 2.5H15M13.4 0.9l1.6 1.6-1.6 1.6" stroke="#1c55a6" stroke-width="1.2" fill="none"/><path d="M10.6 6.5H15M13.4 4.9l1.6 1.6-1.6 1.6" stroke="#1c55a6" stroke-width="1.2" fill="none"/><path d="M8.2 11h6M11.2 8v6" stroke="#0f469c" stroke-width="2.1"/></svg>
<svg class="r" style="left:667px;top:52px;" width="16" height="16"><rect x="4.6" y="0.6" width="6" height="12" fill="#f0f0f0" stroke="#a2a2a2" stroke-width="1.2"/><path d="M0 2.5H4.3M2.7 0.9l1.6 1.6-1.6 1.6" stroke="#a2a2a2" stroke-width="1.1" fill="none"/><path d="M0 6.5H4.3M2.7 4.9l1.6 1.6-1.6 1.6" stroke="#a2a2a2" stroke-width="1.1" fill="none"/><path d="M0 10.5H4.3M2.7 8.9l1.6 1.6-1.6 1.6" stroke="#a2a2a2" stroke-width="1.1" fill="none"/><path d="M10.6 4.5H15M13.4 2.9l1.6 1.6-1.6 1.6" stroke="#a2a2a2" stroke-width="1.1" fill="none"/><rect x="6" y="6.4" width="9.4" height="9.4" fill="#fff" opacity=".8"/><path d="M7.5 6.6v8.8M13.5 6.600v8.800M7.500 8.600l6 4.800M13.500 8.600l-6 4.800" fill="none" stroke="#a2a2a2" stroke-width="1.200"/><path d="M6 8.200l1.500-1.700 1.500 1.700M12 8.200l1.500-1.700 1.500 1.700M6 13.900l1.500 1.700 1.500-1.700M12 13.900l1.500 1.700 1.500-1.700" fill="none" stroke="#a2a2a2" stroke-width="1.100"/></svg>
<svg class="r" style="left:690px;top:52px;" width="16" height="16"><rect x="4.6" y="0.6" width="6" height="8" fill="#f0f0f0" stroke="#a2a2a2" stroke-width="1.2"/><path d="M0 2.5H4.3M2.7 0.9l1.6 1.6-1.6 1.6" stroke="#a2a2a2" stroke-width="1.1" fill="none"/><path d="M0 6.5H4.3M2.7 4.9l1.6 1.6-1.6 1.6" stroke="#a2a2a2" stroke-width="1.1" fill="none"/><path d="M10.6 4.5H15M13.4 2.9l1.6 1.6-1.6 1.6" stroke="#a2a2a2" stroke-width="1.1" fill="none"/><rect x="7" y="6.600" width="8.400" height="9.400" fill="#fff" opacity=".85"/><path d="M14.300 9.600V8h-3.600q-2.300 0-2.300 2.300v2.400q0 2.300 2.300 2.300h3.600v-1.800" fill="none" stroke="#a2a2a2" stroke-width="1.900"/></svg>
<svg class="r" style="left:713px;top:52px;" width="16" height="16"><rect x="0.6" y="0.6" width="14" height="14" fill="#f3f3f3" stroke="#a2a2a2" stroke-width="1.3"/><path d="M2.4 3.5h1.6M5.2 3.5h6.8" stroke="#a2a2a2" stroke-width="1.1"/><path d="M2.4 6.5h1.6M5.2 6.5h6.8" stroke="#a2a2a2" stroke-width="1.1"/><path d="M2.4 9.5h1.6M5.2 9.5h6.8" stroke="#a2a2a2" stroke-width="1.1"/></svg>
<svg class="r" style="left:736px;top:52px;" width="16" height="16"><defs><linearGradient id="lb" x1="0" y1="0" x2="0" y2="1"><stop offset="0" stop-color="#fff"/><stop offset="1" stop-color="#d3e4f6"/></linearGradient><linearGradient id="ly" x1="0" y1="0" x2="0" y2="1"><stop offset="0" stop-color="#ffee4c"/><stop offset="1" stop-color="#fbb41e"/></linearGradient></defs><rect x="0.7" y="0.7" width="13.8" height="13.8" fill="url(#lb)" stroke="#0f469c" stroke-width="1.5"/><path d="M2.4 3.5h1.6" stroke="#0f469c" stroke-width="1.2"/><path d="M2.4 6.5h1.6" stroke="#0f469c" stroke-width="1.2"/><path d="M2.4 9.5h1.6" stroke="#0f469c" stroke-width="1.2"/><path d="M5.4 3.5h6.4" stroke="#0f469c" stroke-width="1.3"/><path d="M5.4 6.5h1M5.4 9.5h1" stroke="#6f95cc" stroke-width="1.1"/><path d="M8.8 6.4h3.8l2.2 2.2v3.8l-2.2 2.2H8.8l-2.2-2.2V8.6z" fill="url(#ly)" stroke="#8c8666" stroke-width="1"/><path d="M8.2 8l5 5M13.2 8l-5 5" stroke="#77756a" stroke-width="1.1"/></svg>
<svg class="r" style="left:764px;top:51px;" width="16" height="16"><path d="M0 2.5H15.4" stroke="#a2a2a2" stroke-width="1.1"/><rect x="5.5" y="0.5" width="7" height="4" fill="#f0f0f0" stroke="#a2a2a2" stroke-width="1.1"/><path d="M0 6.5H6.6M0 7.6H12" stroke="#a2a2a2" stroke-width="1"/><rect x="1.5" y="9.5" width="4" height="4" fill="#f0f0f0" stroke="#a2a2a2" stroke-width="1.1"/><path d="M0 11.5h1.5M5.5 11.5h2" stroke="#a2a2a2" stroke-width="1.1"/><path d="M7.6 8h5l2 2v3l-2 2v.8h-5z" fill="#f4f4f4" stroke="#a2a2a2" stroke-width="1.2"/><path d="M9.6 9.8v3.6M9.6 9.8h1.6q1 .2 1 1.8t-1 1.8h-1.6" fill="none" stroke="#a2a2a2" stroke-width="1.1"/><path d="M14.4 11.5h1.2" stroke="#a2a2a2"/></svg>
<svg class="r" style="left:787px;top:51px;" width="16" height="16"><path d="M0 3.5H15.4" stroke="#a2a2a2" stroke-width="1.1"/><rect x="5.5" y="1.5" width="7" height="4" fill="#f0f0f0" stroke="#a2a2a2" stroke-width="1.1"/><path d="M0 7.5H12.6" stroke="#a2a2a2" stroke-width="1.2"/><rect x="1.5" y="9.5" width="4" height="4" fill="#f0f0f0" stroke="#a2a2a2" stroke-width="1.1"/><path d="M0 11.5h1.5M5.5 11.5h1.4" stroke="#a2a2a2" stroke-width="1.1"/><path d="M7 15.6l3.4-7.4 3.8 7.4M8.4 13h4.2" fill="none" stroke="#a2a2a2" stroke-width="2.2"/><path d="M6.2 15.4h2.6M12.4 15.4h2.8" stroke="#a2a2a2" stroke-width="1.3"/></svg>
<svg class="r" style="left:810px;top:51px;" width="16" height="16"><path d="M0 2.5H15.4" stroke="#a2a2a2" stroke-width="1.1"/><rect x="5.5" y="0.5" width="7" height="4" fill="#f0f0f0" stroke="#a2a2a2" stroke-width="1.1"/><path d="M0 6.7H12" stroke="#a2a2a2" stroke-width="1.9"/><rect x="1.5" y="8.5" width="4" height="4.6" fill="#f0f0f0" stroke="#a2a2a2" stroke-width="1.1"/><path d="M0 10.8h1.5" stroke="#a2a2a2" stroke-width="1.1"/><path d="M9.4 6.6h3.6l2.4 2.4v3.6L13 15H9.4L7 12.6V9z" fill="#f0f0f0" stroke="#a2a2a2" stroke-width="1.2"/><path d="M8.8 8.4l4.8 4.8M13.6 8.4l-4.8 4.8" stroke="#a2a2a2" stroke-width="1.7"/></svg>
<svg class="r" style="left:833px;top:51px;" width="16" height="16"><path d="M5.6 3.5V0.6h2.2M9.8 0.6h3.6v2M13.4 5.4v3.2h-3.6" fill="none" stroke="#8794aa" stroke-width="1.1"/><circle cx="2.6" cy="7.2" r="2" fill="#f4f6fa" stroke="#8794aa" stroke-width="1.1"/><circle cx="9" cy="13" r="2" fill="#f4f6fa" stroke="#8794aa" stroke-width="1.1"/><path d="M4.4 6.6L15 4.2M8.2 11.2L9.6 0.6" stroke="#9a9fa8" stroke-width="1.1"/></svg>
<svg class="r" style="left:858.7px;top:50.5px;" width="13" height="16"><rect x="2.6" y="8.6" width="7" height="6.6" fill="#fff" stroke="#8a98b0" stroke-width="1.2"/><path d="M0.4 11.5h2.2M9.6 11.5h2.2" stroke="#8a98b0" stroke-width="1.1"/><path d="M4 0.6h4.4v4.8h3.2L6.2 11.6 0.8 5.4H4z" fill="#e9e5da" stroke="#b9ab9a" stroke-width="1.1" stroke-linejoin="round"/></svg>
<svg class="r" style="left:881.6px;top:50.5px;" width="14" height="16"><rect x="2.6" y="8.6" width="7" height="6.6" fill="#fff" stroke="#8a98b0" stroke-width="1.2"/><path d="M0.4 11.5h2.2M9.6 11.5h2.2" stroke="#8a98b0" stroke-width="1.1"/><path d="M6.6 0.6l5.8 6H9.2v4.6H4V6.6H0.8z" fill="#e9e5da" stroke="#b9ab9a" stroke-width="1.1" stroke-linejoin="round"/></svg>
<svg class="r" style="left:902px;top:51px;" width="16" height="16"><path d="M0 2.5H15.4" stroke="#8a98b0" stroke-width="1.1"/><rect x="5.5" y="0.5" width="7" height="4" fill="#fff" stroke="#8a98b0" stroke-width="1.1"/><path d="M0 6.5H8.4" stroke="#8a98b0" stroke-width="1.1"/><rect x="1.5" y="8.5" width="4" height="4" fill="#fff" stroke="#8a98b0" stroke-width="1.1"/><path d="M0 10.5h1.5M5.5 10.5H14" stroke="#8a98b0" stroke-width="1.1"/><path d="M9 5.6l3.6 3.4h-2q.2 3.6 3.6 5.4h-2.6q-3.4-1.6-3.6-5.4H6z" fill="#e9e5da" stroke="#b9ab9a" stroke-width="1"/></svg>
<svg class="r" style="left:925px;top:51px;" width="16" height="16"><defs><linearGradient id="wi" x1="0" y1="0" x2="0" y2="1"><stop offset="0" stop-color="#fff"/><stop offset="1" stop-color="#d4e8fa"/></linearGradient></defs><rect x="0.6" y="0.6" width="12.4" height="10.4" fill="url(#wi)" stroke="#b38b52" stroke-width="1.1"/><rect x="0" y="0" width="13.6" height="3" fill="#4a8fd8"/><path d="M1.4 1.6h10.8" stroke="#9cc8f2" stroke-width="1"/><rect x="4.6" y="4.6" width="10.4" height="10" fill="#eef6fd" stroke="#9c8f68" stroke-width="1.2"/><path d="M4.6 14.6h10.4V4.6" fill="none" stroke="#6878a4" stroke-width="1.2"/><rect x="6" y="6" width="7.6" height="7.2" fill="#cfe6fa"/><path d="M6 7.2q2-.8 4 .2t3.600 .2v1.600H6z" fill="#5b9ae0"/><path d="M6 10.200q2-1.800 4-.6l3.600 .6v3H6z" fill="#4f8a62"/><path d="M6 12h7.600v1.200H6z" fill="#2a5aa2"/></svg>
<svg class="r" style="left:1357px;top:50.5px;" width="16" height="16"><path d="M8.5 6.4V5.2q0-1.400 2.400-2.200t3-2.600" fill="none" stroke="#6e7f9e" stroke-width="1.1"/><rect x="0.6" y="6.600" width="14.800" height="8" fill="#a9bada" stroke="#7486a6" stroke-width="1.2"/><rect x="2" y="8.4" width="1.2" height="1" fill="#fff"/><rect x="4" y="8.4" width="1.2" height="1" fill="#fff"/><rect x="6" y="8.4" width="1.2" height="1" fill="#fff"/><rect x="8" y="8.4" width="1.2" height="1" fill="#fff"/><rect x="10" y="8.4" width="1.2" height="1" fill="#fff"/><rect x="12" y="8.4" width="2" height="1" fill="#fff"/><rect x="2" y="10.4" width="2" height="1" fill="#fff"/><rect x="5" y="10.4" width="1.2" height="1" fill="#fff"/><rect x="7" y="10.4" width="2" height="1" fill="#fff"/><rect x="10" y="10.4" width="1.2" height="1" fill="#fff"/><rect x="12" y="10.4" width="2" height="1" fill="#fff"/><rect x="2" y="12.4" width="1.2" height="1" fill="#fff"/><rect x="4" y="12.4" width="1.2" height="1" fill="#fff"/><rect x="6" y="12.4" width="4" height="1" fill="#fff"/><rect x="11" y="12.4" width="1.2" height="1" fill="#fff"/><rect x="13" y="12.4" width="1.2" height="1" fill="#fff"/></svg>
<svg class="r" style="left:9px;top:86px;" width="12" height="12"><path d="M3 1.500H11M1.500 3v6.500H4M1.500 5.500H4" fill="none" stroke="#5b7fc0" stroke-width="1"/><path d="M7 5.500h1.600M9.400 5.500H11M7 9.500h1.600M9.400 9.500H11" stroke="#5b7fc0" stroke-width="1"/><rect x="0.5" y="0.5" width="2" height="2" fill="#c6d6f0" stroke="#5b7fc0" stroke-width="1"/><rect x="4.5" y="4.5" width="2" height="2" fill="#c6d6f0" stroke="#5b7fc0" stroke-width="1"/><rect x="4.5" y="8.5" width="2" height="2" fill="#c6d6f0" stroke="#5b7fc0" stroke-width="1"/></svg>
<svg class="r" style="left:115.5px;top:83px;" width="15" height="16"><path d="M0.600 1.600q3-1 6.400 .6v10.400q-3.400-1.600-6.400-.6z" fill="#fbfbfb" stroke="#8a7a58" stroke-width="1"/><path d="M7 2.200q3.400-1.600 7-.6v10.400q-3.600-1-7 .6z" fill="#fbfbfb" stroke="#5e6a86" stroke-width="1"/><path d="M2 4.500h3.400M2 6.500h3.400M2 8.500h3.400" stroke="#c4c8d4" stroke-width=".9"/><path d="M0.600 12v1.200q3-.8 6.400 .8q3.400-1.600 7-.8V12" fill="none" stroke="#6a6f80" stroke-width="1"/><path d="M6.600 0.400h4.800v14.400l-2.400-2.400-2.400 2.400z" fill="#4e9cec" stroke="#1f62c0" stroke-width=".9"/><path d="M8 1v12" stroke="#9cccf8" stroke-width="1"/></svg>
<svg class="r" style="left:206.5px;top:84px;" width="16" height="15"><path d="M0 2.500H15.400" stroke="#1c55a6" stroke-width="1.200"/><rect x="5.500" y="0.600" width="7.400" height="3.900" rx=".6" fill="#fff" stroke="#1c55a6" stroke-width="1.200"/><path d="M0 6.500H10.400M9.700 6.500V11.500M5.500 11.500H14.600M0 11.500H1.500" fill="none" stroke="#1c55a6" stroke-width="1.200"/><rect x="1.500" y="9.500" width="4" height="4" rx=".5" fill="#fff" stroke="#1c55a6" stroke-width="1.200"/></svg>
<svg class="r" style="left:458px;top:84px;" width="16" height="15"><path d="M0 2.500H15.400" stroke="#1c55a6" stroke-width="1.200"/><rect x="5.500" y="0.600" width="7.400" height="3.900" rx=".6" fill="#fff" stroke="#1c55a6" stroke-width="1.200"/><path d="M0 6.500H10.400M9.700 6.500V11.500M5.500 11.500H14.600M0 11.500H1.500" fill="none" stroke="#1c55a6" stroke-width="1.200"/><rect x="1.500" y="9.500" width="4" height="4" rx=".5" fill="#fff" stroke="#1c55a6" stroke-width="1.200"/></svg>
<svg class="r" style="left:6.8px;top:738.5px;" width="14" height="15"><rect x="0.600" y="0.600" width="4.800" height="4.800" fill="#fff" stroke="#2f6fc0" stroke-width="1.100"/><rect x="0.600" y="9.600" width="4.800" height="4.800" fill="#fff" stroke="#2f6fc0" stroke-width="1.100"/><rect x="7.500" y="6.500" width="2" height="2" fill="#fff" stroke="#2f6fc0" stroke-width="1"/><path d="M7 3.500h6M11 7.500h2M7 12.500h6" stroke="#2f6fc0" stroke-width="1.100"/></svg>
<svg class="r" style="left:360.5px;top:84px;" width="12" height="15"><defs><linearGradient id="dg" x1="0" y1="0" x2="0" y2="1"><stop offset="0.35" stop-color="#fff"/><stop offset="1" stop-color="#dce6f6"/></linearGradient></defs><path d="M0.5 0.5h6.600l3.400 3.400v9.600h-10z" fill="url(#dg)" stroke="#7f93bf" stroke-width="1"/><path d="M0.500 4V0.500h6.600l3.400 3.400" fill="none" stroke="#c4a55e" stroke-width="1"/><path d="M7.100 0.700v3.200h3.200z" fill="#e8d5a0" stroke="#c4a55e" stroke-width="0.700"/><path d="M2.500 4.5h6" stroke="#8ea3cf" stroke-width="1"/><path d="M2.500 6.5h6" stroke="#8ea3cf" stroke-width="1"/><path d="M2.500 8.5h6" stroke="#8ea3cf" stroke-width="1"/><path d="M2.500 10.5h6" stroke="#8ea3cf" stroke-width="1"/><path d="M2.500 12.5h4" stroke="#8ea3cf" stroke-width="1"/></svg>
<svg class="r" style="left:491px;top:990px;" width="13" height="13"><rect x="5.100" y="0" width="2.800" height="4" rx=".5" fill="#353535" transform="rotate(0 6.500 6.500)"/><rect x="5.100" y="0" width="2.800" height="4" rx=".5" fill="#353535" transform="rotate(45 6.500 6.500)"/><rect x="5.100" y="0" width="2.800" height="4" rx=".5" fill="#353535" transform="rotate(90 6.500 6.500)"/><rect x="5.100" y="0" width="2.800" height="4" rx=".5" fill="#353535" transform="rotate(135 6.500 6.500)"/><rect x="5.100" y="0" width="2.800" height="4" rx=".5" fill="#353535" transform="rotate(180 6.500 6.500)"/><rect x="5.100" y="0" width="2.800" height="4" rx=".5" fill="#353535" transform="rotate(225 6.500 6.500)"/><rect x="5.100" y="0" width="2.800" height="4" rx=".5" fill="#353535" transform="rotate(270 6.500 6.500)"/><rect x="5.100" y="0" width="2.800" height="4" rx=".5" fill="#353535" transform="rotate(315 6.500 6.500)"/><circle cx="6.500" cy="6.500" r="4.500" fill="#353535"/><circle cx="6.500" cy="6.500" r="1.700" fill="#fff"/></svg>
<svg class="r" style="left:511.5px;top:989.5px;" width="17" height="13"><path d="M0.500 6.200L8 0.600l7.800 4.200v3L7.600 12.400 0.500 8.600z" fill="#2a78d8" stroke="#1e5cb4" stroke-width=".8"/><path d="M0.500 6.200L8 0.600l7.800 4.200L7.600 10z" fill="#4f9cec"/><path d="M4 4l4-2.400 5 2.800" fill="none" stroke="#9ccaf6" stroke-width="1"/><path d="M0.800 6.800l6.800 3.700v1.500L0.800 8.400z" fill="#f2f6fb"/><path d="M2.800 4l1 .5M7.400 1.200l1 .5M13 5.200l.200 1.600M9.200 8l.2 2" stroke="#3fd04a" stroke-width="1.300"/></svg>
<svg class="r" style="left:544px;top:988.6px;" width="16" height="15"><rect x="2.600" y="0.600" width="12" height="11.400" fill="#fff" stroke="#1c55a6" stroke-width="1.200"/><path d="M5.5 2v7" stroke="#1c55a6" stroke-width="1"/><rect x="4" y="3.6" width="3" height="1.800" fill="#22a33a"/><path d="M8.5 2v7" stroke="#1c55a6" stroke-width="1"/><rect x="7" y="6.4" width="3" height="1.800" fill="#22a33a"/><path d="M11.5 2v7" stroke="#1c55a6" stroke-width="1"/><rect x="10" y="2.6" width="3" height="1.800" fill="#22a33a"/><rect x="0.600" y="8.600" width="12" height="5" fill="#1c55a6" stroke="#1c55a6" stroke-width="1.200"/><path d="M2.500 10.500v2.400M4.500 11.500v1.400M6.500 10.500v2.400M8.500 11.500v1.400M10.500 10.500v2.400" stroke="#fff" stroke-width="1"/><path d="M1.400 10h10.400" stroke="#fff" stroke-width=".8"/></svg>
<svg class="r" style="left:567px;top:988.4px;" width="16" height="16"><rect x="2.600" y="0.600" width="12" height="9" fill="#f0f0f0" stroke="#a2a2a2" stroke-width="1.200"/><path d="M6 2.400v5M4.600 4h2.800M11 2.400v5M9.600 2.800h2.800" stroke="#a2a2a2" stroke-width="1.100"/><rect x="0.600" y="8.600" width="6" height="5" fill="#f0f0f0" stroke="#a2a2a2" stroke-width="1.200"/><path d="M2.500 10.500v3M4.500 10.500v3" stroke="#a2a2a2"/><path d="M9 7.600h3.400l2 2v3.400l-2 2H9l-2-2V9.600z" fill="#f2f2f2" stroke="#a2a2a2" stroke-width="1.100"/><path d="M8.600 9.200l4.200 4.200M12.800 9.200l-4.200 4.200" stroke="#a2a2a2" stroke-width="1.300"/></svg>
<svg class="r" style="left:590px;top:989px;" width="16" height="15"><rect x="2.600" y="0.600" width="12" height="8" fill="#f0f0f0" stroke="#a2a2a2" stroke-width="1.200"/><path d="M6 2.800l1.200 1.600H4.800zM11 2.400v4.600M9.600 2.600h2.800M9.600 7h2.800" stroke="#a2a2a2" stroke-width="1" fill="#a2a2a2"/><path d="M0.600 6.600h8M0.600 9.200h14M0.600 9.200v4.400h7M3 11v2.600" fill="none" stroke="#a2a2a2" stroke-width="1.500"/></svg>
<svg class="r" style="left:614px;top:990.5px;" width="13" height="12"><path d="M0.400 0.400L12 5.800 0.400 11.400z" fill="#a2a2a2"/><path d="M0.400 0.400l2.200 0v2z" fill="#8a8a8a"/></svg>
<svg class="r" style="left:637.5px;top:990.5px;" width="12" height="12"><rect x="0.600" y="0.600" width="10.600" height="10.400" fill="#9f9f9f" stroke="#8e8e8e" stroke-width="1"/><path d="M1.400 2.300h9" stroke="#d0d0d0" stroke-width="1"/></svg>
<div class="r" style="left:1257px;top:985px;width:23px;height:21px;background:#cce4ff;border:1px solid #9ccbff;box-sizing:border-box;"></div>
<svg class="r" style="left:1238px;top:989px;" width="15" height="15"><defs><linearGradient id="pga" x1="0" y1="0" x2="1" y2="1"><stop offset="0" stop-color="#fff"/><stop offset="1" stop-color="#d8eef8"/></linearGradient></defs><rect x="0.600" y="0.600" width="13.800" height="13.600" fill="url(#pga)" stroke="#a0865a" stroke-width="1.100"/><path d="M0.200 0.600h14.600M0.200 14.300h14.600" stroke="#5e4a22" stroke-width="1.200"/><path d="M3 3.500h9M3 5.500h9M3 7.500h9M3 9.500h5" stroke="#8194c4" stroke-width="1"/></svg>
<svg class="r" style="left:1262px;top:989px;" width="15" height="15"><defs><linearGradient id="pgb" x1="0" y1="0" x2="1" y2="1"><stop offset="0" stop-color="#fff"/><stop offset="1" stop-color="#d8eef8"/></linearGradient></defs><rect x="0.600" y="0.600" width="13.800" height="13.600" fill="url(#pgb)" stroke="#a0865a" stroke-width="1.100"/><path d="M0.200 0.600h14.600M0.200 14.300h14.600" stroke="#5e4a22" stroke-width="1.200"/><rect x="1.200" y="1.200" width="4.300" height="12.500" fill="#8aa2d2"/><path d="M5.800 0.600v13.600" stroke="#3c3630" stroke-width="1.200"/><path d="M8 3.500h4.600M8 5.500h4.600M8 7.500h4.600M8 9.500h2.400" stroke="#8194c4" stroke-width="1"/></svg>
<svg class="r" style="left:1284px;top:989px;" width="15" height="15"><defs><linearGradient id="pgc" x1="0" y1="0" x2="1" y2="1"><stop offset="0" stop-color="#fff"/><stop offset="1" stop-color="#d8eef8"/></linearGradient></defs><rect x="0.600" y="0.600" width="13.800" height="13.600" fill="url(#pgc)" stroke="#a0865a" stroke-width="1.100"/><path d="M0.200 0.600h14.600M0.200 14.300h14.600" stroke="#5e4a22" stroke-width="1.200"/><circle cx="9.600" cy="7.600" r="2.300" fill="#7fa0dc" stroke="#4e72b8" stroke-width=".8"/><path d="M5.800 14v-1.600q.4-2.400 3.800-2.400t3.800 2.400V14z" fill="#7fa0dc" stroke="#4e72b8" stroke-width=".8"/></svg>
<div class="r" style="left:1313px;top:995px;width:12px;height:2px;background:#1b34b4;"></div>
<div class="r" style="left:1336px;top:995px;width:12px;height:2px;background:#1b34b4;"></div>
<div class="r" style="left:1341px;top:990px;width:2px;height:12px;background:#1b34b4;"></div>
<span class="t" style="left:1358.50px;top:988.67px;font-size:7px;color:#a3a3a3;transform:scaleX(0.9846);">100</span>
<svg class="r" style="left:1361px;top:996px;" width="9" height="8"><path d="M7.600 0.400L1.400 7.600" stroke="#a3a3a3" stroke-width="1"/><circle cx="2" cy="1.800" r="1.300" fill="none" stroke="#a3a3a3"/><circle cx="7" cy="6.200" r="1.300" fill="none" stroke="#a3a3a3"/></svg>
<svg class="r" style="left:1382px;top:989.7px;" width="13" height="13"><g transform="translate(6.500 6.500) scale(1 1)"><path d="M1.600 1.600L5.800 5.800" stroke="#1b34b4" stroke-width="1.700"/><path d="M6.500 2v4.500H2z" fill="#1b34b4"/></g><g transform="translate(6.500 6.500) scale(-1 1)"><path d="M1.600 1.600L5.800 5.800" stroke="#1b34b4" stroke-width="1.700"/><path d="M6.500 2v4.500H2z" fill="#1b34b4"/></g><g transform="translate(6.500 6.500) scale(1 -1)"><path d="M1.600 1.600L5.800 5.800" stroke="#1b34b4" stroke-width="1.700"/><path d="M6.500 2v4.500H2z" fill="#1b34b4"/></g><g transform="translate(6.500 6.500) scale(-1 -1)"><path d="M1.600 1.600L5.800 5.800" stroke="#1b34b4" stroke-width="1.700"/><path d="M6.500 2v4.500H2z" fill="#1b34b4"/></g></svg>
<svg class="r" style="left:1px;top:762px" width="347" height="219"><g transform="translate(-143.509 -44.340) scale(0.3657)"><defs><linearGradient id="osq" x1="0" y1="0" x2="1" y2="1"><stop offset="0" stop-color="#ff7a55"/><stop offset="1" stop-color="#e02a10"/></linearGradient></defs><path d="M717 202.25H737" fill="none" stroke="#2a2a40" stroke-width="3.2"/><path d="M717 583.2H1099" fill="none" stroke="#2a2a40" stroke-width="3.2"/><path d="M727 583.2V274Q727 269.25 732 269.25H737" fill="none" stroke="#2a2a40" stroke-width="3.2"/><path d="M1079 360H1099" fill="none" stroke="#2a2a40" stroke-width="3.2"/><path d="M1089 360V531.4Q1089 536.4 1094 536.4H1099" fill="none" stroke="#2a2a40" stroke-width="3.2"/><rect x="405.5" y="183" width="281" height="76" fill="#c9d4f7" stroke="#20203a" stroke-width="3.4"/><rect x="627" y="260.5" width="60" height="14.6" fill="#5a8fe0"/><rect x="767.5" y="183" width="281" height="371" fill="#c9d4f7" stroke="#20203a" stroke-width="3.4"/><rect x="1000.5" y="555.5" width="48.5" height="14.6" fill="#5a8fe0"/><rect x="1129.5" y="340.5" width="199" height="56" fill="#c9d4f7" stroke="#20203a" stroke-width="3.4"/><rect x="1269" y="398" width="60" height="14.6" fill="#5a8fe0"/><rect x="1129.5" y="517" width="199" height="123" fill="#c9d4f7" stroke="#20203a" stroke-width="3.4"/><rect x="1269" y="641.5" width="60" height="14.6" fill="#5a8fe0"/><rect x="487.5" y="564" width="199" height="76" fill="#c9d4f7" stroke="#20203a" stroke-width="3.4"/><rect x="627" y="641.5" width="60" height="14.6" fill="#5a8fe0"/><rect x="546.5" y="209.75" width="135" height="20" fill="#e4e6fa" stroke="#b4b6cc" stroke-width="2.600"/><rect x="546.5" y="229.75" width="135" height="20" fill="#e4e6fa" stroke="#b4b6cc" stroke-width="2.600"/><rect x="772.5" y="209.75" width="135" height="20" fill="#e4e6fa" stroke="#b4b6cc" stroke-width="2.600"/><rect x="772.5" y="229.75" width="135" height="20" fill="#e4e6fa" stroke="#b4b6cc" stroke-width="2.600"/><rect x="772.5" y="276.75" width="81" height="20" fill="#e4e6fa" stroke="#b4b6cc" stroke-width="2.600"/><rect x="772.5" y="296.75" width="81" height="20" fill="#e4e6fa" stroke="#b4b6cc" stroke-width="2.600"/><rect x="772.5" y="343.75" width="66" height="20" fill="#e4e6fa" stroke="#b4b6cc" stroke-width="2.600"/><rect x="772.5" y="363.75" width="66" height="20" fill="#e4e6fa" stroke="#b4b6cc" stroke-width="2.600"/><rect x="772.5" y="410.75" width="86" height="20" fill="#e4e6fa" stroke="#b4b6cc" stroke-width="2.600"/><rect x="772.5" y="457.75" width="63" height="20" fill="#e4e6fa" stroke="#b4b6cc" stroke-width="2.600"/><rect x="772.5" y="477.75" width="63" height="20" fill="#e4e6fa" stroke="#b4b6cc" stroke-width="2.600"/><rect x="772.5" y="524.75" width="99" height="20" fill="#e4e6fa" stroke="#b4b6cc" stroke-width="2.600"/><rect x="987.5" y="367.5" width="56" height="20" fill="#e4e6fa" stroke="#b4b6cc" stroke-width="2.600"/><rect x="1134.5" y="367.5" width="56" height="20" fill="#e4e6fa" stroke="#b4b6cc" stroke-width="2.600"/><rect x="1134.5" y="543.9" width="56" height="20" fill="#e4e6fa" stroke="#b4b6cc" stroke-width="2.600"/><rect x="1134.5" y="590.7" width="81" height="20" fill="#e4e6fa" stroke="#b4b6cc" stroke-width="2.600"/><rect x="1134.5" y="610.7" width="81" height="20" fill="#e4e6fa" stroke="#b4b6cc" stroke-width="2.600"/><rect x="600.5" y="590.7" width="81" height="20" fill="#e4e6fa" stroke="#b4b6cc" stroke-width="2.600"/><rect x="600.5" y="610.7" width="81" height="20" fill="#e4e6fa" stroke="#b4b6cc" stroke-width="2.600"/><path d="M727 577.2l6 6l-6 6l-6-6z" fill="#111"/><path d="M1089 354l6 6l-6 6l-6-6z" fill="#111"/><path d="M686.5 192.25H707.5L717 202.25L707.5 212.25H686.5Z" fill="#dcdcf4" stroke="#2a2a44" stroke-width="3.200"/><circle cx="697.1" cy="202.25" r="6.200" fill="#2f7fe0"/><path d="M737 192.25H758L767.5 202.25L758 212.25H737Z" fill="#dcdcf4" stroke="#2a2a44" stroke-width="3.200"/><circle cx="747.6" cy="202.25" r="6.200" fill="#2f7fe0"/><path d="M737 259.25H758L767.5 269.25L758 279.25H737Z" fill="#dcdcf4" stroke="#2a2a44" stroke-width="3.200"/><rect x="741.1" y="262.75" width="13" height="13" fill="url(#osq)"/><path d="M737 326.25H758L767.5 336.25L758 346.25H737Z" fill="#dcdcf4" stroke="#2a2a44" stroke-width="3.200"/><rect x="741.1" y="329.75" width="13" height="13" fill="url(#osq)"/><path d="M737 393.25H758L767.5 403.25L758 413.25H737Z" fill="#dcdcf4" stroke="#2a2a44" stroke-width="3.200"/><rect x="741.1" y="396.75" width="13" height="13" fill="url(#osq)"/><path d="M737 440.25H758L767.5 450.25L758 460.25H737Z" fill="#dcdcf4" stroke="#2a2a44" stroke-width="3.200"/><rect x="741.1" y="443.75" width="13" height="13" fill="url(#osq)"/><path d="M737 507.25H758L767.5 517.25L758 527.25H737Z" fill="#dcdcf4" stroke="#2a2a44" stroke-width="3.200"/><rect x="741.1" y="510.75" width="13" height="13" fill="url(#osq)"/><path d="M1048.5 350H1069.5L1079 360L1069.5 370H1048.5Z" fill="#dcdcf4" stroke="#2a2a44" stroke-width="3.200"/><rect x="1052.6" y="353.5" width="13" height="13" fill="url(#osq)"/><path d="M1099 350H1120L1129.5 360L1120 370H1099Z" fill="#dcdcf4" stroke="#2a2a44" stroke-width="3.200"/><rect x="1103.1" y="353.5" width="13" height="13" fill="url(#osq)"/><path d="M1099 526.4H1120L1129.5 536.4L1120 546.4H1099Z" fill="#dcdcf4" stroke="#2a2a44" stroke-width="3.200"/><rect x="1103.1" y="529.9" width="13" height="13" fill="url(#osq)"/><path d="M1099 573.2H1120L1129.5 583.2L1120 593.2H1099Z" fill="#dcdcf4" stroke="#2a2a44" stroke-width="3.200"/><rect x="1103.1" y="576.7" width="13" height="13" fill="url(#osq)"/><path d="M686.5 573.2H707.5L717 583.2L707.5 593.2H686.5Z" fill="#dcdcf4" stroke="#2a2a44" stroke-width="3.200"/><rect x="690.6" y="576.7" width="13" height="13" fill="url(#osq)"/><text x="631.5" y="272.2" font-family="Liberation Sans" font-size="13" fill="#eaf0ff" textLength="50" lengthAdjust="spacingAndGlyphs" opacity=".9">Compact</text><text x="1005" y="567.2" font-family="Liberation Sans" font-size="13" fill="#eaf0ff" textLength="38.5" lengthAdjust="spacingAndGlyphs" opacity=".9">Normal</text><text x="1273.5" y="409.7" font-family="Liberation Sans" font-size="13" fill="#eaf0ff" textLength="50" lengthAdjust="spacingAndGlyphs" opacity=".9">Compact</text><text x="1273.5" y="653.2" font-family="Liberation Sans" font-size="13" fill="#eaf0ff" textLength="50" lengthAdjust="spacingAndGlyphs" opacity=".9">Compact</text><text x="631.5" y="653.2" font-family="Liberation Sans" font-size="13" fill="#eaf0ff" textLength="50" lengthAdjust="spacingAndGlyphs" opacity=".9">Compact</text></g></svg>
</body></html>
